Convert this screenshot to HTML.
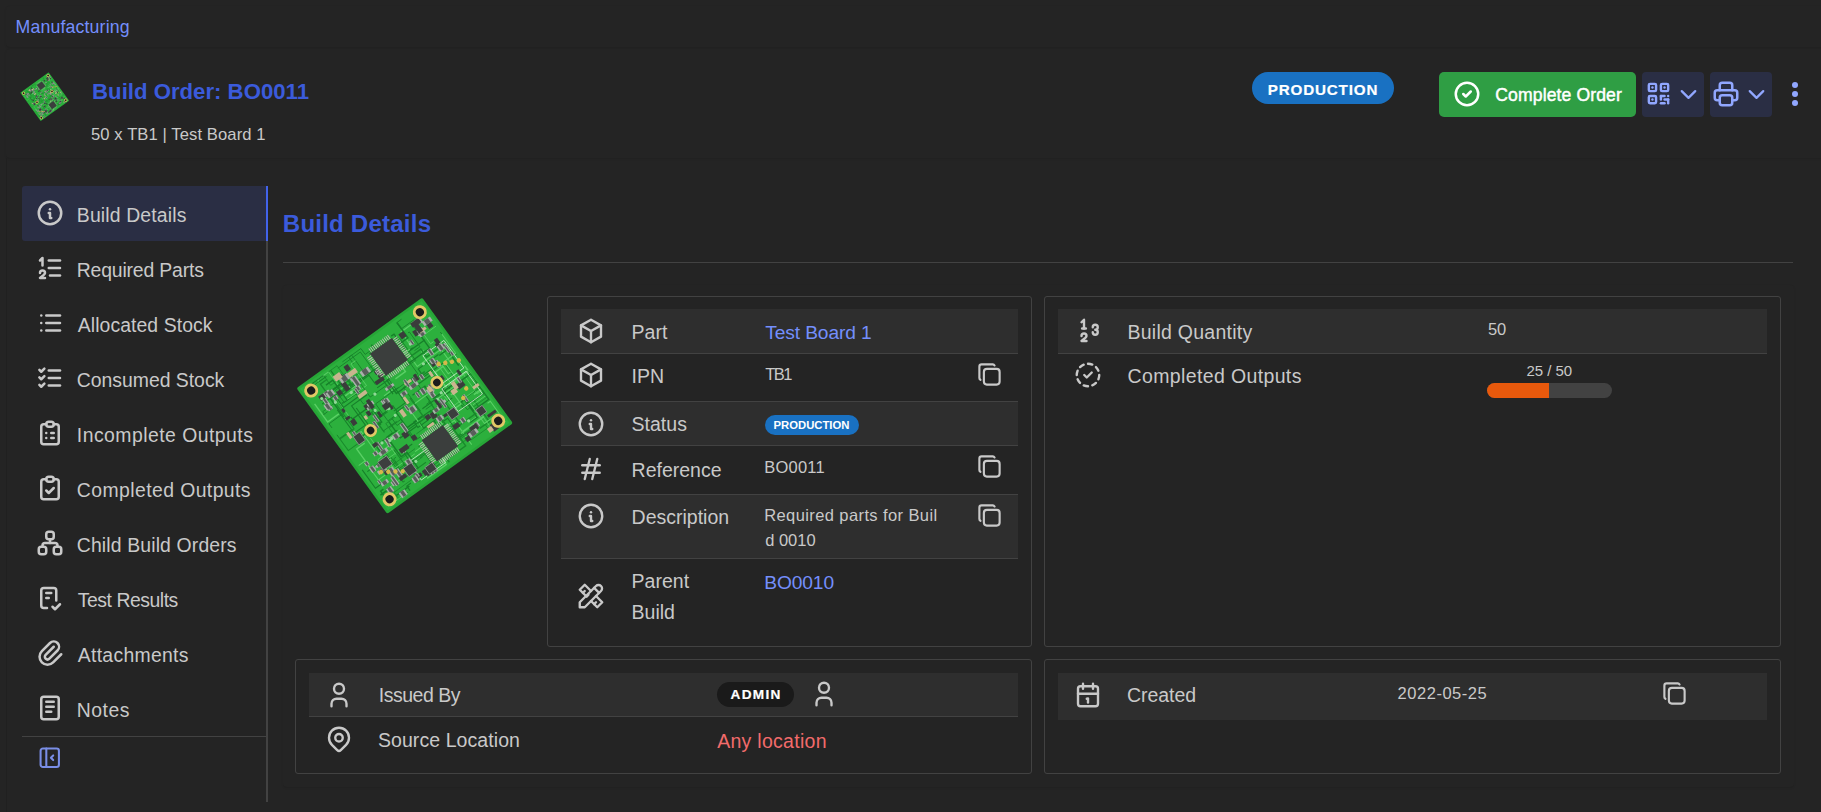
<!DOCTYPE html><html><head><meta charset="utf-8"><style>
html,body{margin:0;padding:0;}
body{width:1821px;height:812px;overflow:hidden;background:#242424;position:relative;font-family:"Liberation Sans", sans-serif;}
.t{position:absolute;white-space:nowrap;}
.r{position:absolute;}
.i{position:absolute;overflow:visible;}
</style></head><body>
<div class="r" style="left:6px;top:6px;width:1824px;height:41px;background:#242424;border-radius:4px;box-shadow:0 1px 2px rgba(0,0,0,0.10);"></div>
<div class="r" style="left:6px;top:49px;width:1824px;height:109px;background:#242424;border-radius:4px;box-shadow:0 1px 2px rgba(0,0,0,0.10);"></div>
<div class="r" style="left:6px;top:158px;width:1px;height:654px;background:#202020;border-radius:0px;"></div>
<div class="r" style="left:283px;top:285px;width:1511px;height:502px;background:#242424;border-radius:4px;box-shadow:0 1px 2px rgba(0,0,0,0.10);"></div>
<div class="t" style="left:15.50px;top:19.12px;font-size:17.7px;line-height:17.7px;color:#748ffc;font-weight:400;letter-spacing:0.167px;">Manufacturing</div>
<svg class="i" style="left:0;top:0" width="1821" height="812" viewBox="0 0 1821 812"><g transform="translate(44.7,96.7) rotate(-35.8) scale(0.22580645161290322)">
<rect x="-77.5" y="-77.5" width="155" height="155" rx="2" fill="#27a637"/>
<rect x="-75" y="-75" width="150" height="150" fill="#2cb03d"/>
<path d="M-24.7 -48.9 L-51.8 -48.9 L-51.8 -29.6 L-72.0 -29.6 L-72.0 -24.6" stroke="#17802a" stroke-width="0.8" fill="none"/>
<path d="M-58.0 -11.5 L-72.0 -11.5 L-72.0 -16.0" stroke="#17802a" stroke-width="0.8" fill="none"/>
<path d="M18.3 11.6 L22.9 11.6 L22.9 5.4" stroke="#17802a" stroke-width="0.8" fill="none"/>
<path d="M7.9 -51.4 L-13.4 -51.4 L-13.4 -72.0 L-24.9 -72.0" stroke="#17802a" stroke-width="0.8" fill="none"/>
<path d="M11.4 19.4 L-12.7 19.4 L-12.7 32.2 L-8.9 32.2" stroke="#17802a" stroke-width="1.1" fill="none"/>
<path d="M25.3 -10.1 L23.2 -10.1 L23.2 15.3 L14.9 15.3" stroke="#17802a" stroke-width="0.8" fill="none"/>
<path d="M27.9 -35.8 L15.9 -35.8 L15.9 -36.1 L6.5 -36.1 L6.5 -39.2" stroke="#17802a" stroke-width="0.8" fill="none"/>
<path d="M1.7 -46.9 L-19.2 -46.9 L-19.2 -47.6 L-46.9 -47.6" stroke="#17802a" stroke-width="1.4" fill="none"/>
<path d="M10.2 52.6 L0.6 52.6 L0.6 43.6 L0.4 43.6" stroke="#5ad065" stroke-width="0.8" fill="none"/>
<path d="M47.6 62.3 L59.4 62.3 L59.4 36.2 L72.0 36.2" stroke="#1a8a2c" stroke-width="1.4" fill="none"/>
<path d="M10.9 25.4 L-2.0 25.4 L-2.0 18.5 L8.1 18.5" stroke="#17802a" stroke-width="1.1" fill="none"/>
<path d="M-20.2 15.5 L-46.7 15.5 L-46.7 31.6 L-68.9 31.6" stroke="#17802a" stroke-width="1.1" fill="none"/>
<path d="M-15.3 52.0 L-35.3 52.0 L-35.3 46.1" stroke="#1a8a2c" stroke-width="0.8" fill="none"/>
<path d="M44.7 51.0 L57.1 51.0 L57.1 72.0 L68.0 72.0" stroke="#5ad065" stroke-width="0.8" fill="none"/>
<path d="M-48.9 -45.3 L-39.4 -45.3 L-39.4 -72.0" stroke="#17802a" stroke-width="1.1" fill="none"/>
<path d="M-30.5 -49.6 L-38.4 -49.6 L-38.4 -45.6 L-11.2 -45.6 L-11.2 -34.2" stroke="#17802a" stroke-width="1.1" fill="none"/>
<path d="M55.9 39.2 L72.0 39.2 L72.0 32.7 L65.9 32.7 L65.9 9.0" stroke="#5ad065" stroke-width="0.8" fill="none"/>
<path d="M-43.3 67.9 L-63.6 67.9 L-63.6 58.3 L-72.0 58.3" stroke="#17802a" stroke-width="1.4" fill="none"/>
<path d="M-48.8 -55.8 L-42.0 -55.8 L-42.0 -72.0 L-59.5 -72.0" stroke="#5ad065" stroke-width="0.8" fill="none"/>
<path d="M18.8 63.8 L10.7 63.8 L10.7 41.1 L31.6 41.1 L31.6 70.7" stroke="#5ad065" stroke-width="1.1" fill="none"/>
<path d="M-2.3 -58.0 L12.7 -58.0 L12.7 -43.6" stroke="#5ad065" stroke-width="1.4" fill="none"/>
<path d="M-47.4 -66.8 L-55.7 -66.8 L-55.7 -55.4 L-30.8 -55.4 L-30.8 -39.9" stroke="#1a8a2c" stroke-width="1.4" fill="none"/>
<path d="M50.9 27.5 L52.0 27.5 L52.0 52.0 L43.3 52.0" stroke="#17802a" stroke-width="1.4" fill="none"/>
<path d="M5.8 0.4 L-10.8 0.4 L-10.8 19.1 L18.3 19.1 L18.3 40.2" stroke="#17802a" stroke-width="1.1" fill="none"/>
<path d="M33.6 -38.3 L33.1 -38.3 L33.1 -24.4 L62.5 -24.4 L62.5 -7.0" stroke="#5ad065" stroke-width="1.1" fill="none"/>
<path d="M-42.9 14.7 L-46.1 14.7 L-46.1 40.9 L-16.8 40.9" stroke="#1a8a2c" stroke-width="0.8" fill="none"/>
<path d="M-39.1 -38.2 L-48.9 -38.2 L-48.9 -39.3" stroke="#17802a" stroke-width="1.1" fill="none"/>
<path d="M57.3 -21.8 L32.4 -21.8 L32.4 -12.2 L57.0 -12.2 L57.0 4.7" stroke="#17802a" stroke-width="1.1" fill="none"/>
<path d="M54.5 -9.3 L44.4 -9.3 L44.4 8.8 L72.0 8.8 L72.0 2.5" stroke="#5ad065" stroke-width="1.4" fill="none"/>
<path d="M62.6 31.5 L72.0 31.5 L72.0 3.1" stroke="#5ad065" stroke-width="1.4" fill="none"/>
<path d="M-49.5 45.7 L-40.1 45.7 L-40.1 36.7 L-37.2 36.7" stroke="#17802a" stroke-width="0.8" fill="none"/>
<path d="M-68.0 65.9 L-72.0 65.9 L-72.0 72.0 L-72.0 72.0 L-72.0 72.0" stroke="#17802a" stroke-width="0.8" fill="none"/>
<path d="M-66.1 -40.2 L-72.0 -40.2 L-72.0 -35.0 L-72.0 -35.0 L-72.0 -39.9" stroke="#17802a" stroke-width="0.8" fill="none"/>
<path d="M57.4 -20.5 L67.2 -20.5 L67.2 -1.6 L68.2 -1.6" stroke="#17802a" stroke-width="1.4" fill="none"/>
<path d="M-48.7 1.5 L-32.2 1.5 L-32.2 8.0 L-15.6 8.0" stroke="#17802a" stroke-width="0.8" fill="none"/>
<path d="M-50.2 16.7 L-46.8 16.7 L-46.8 6.2" stroke="#5ad065" stroke-width="0.8" fill="none"/>
<path d="M53.7 -62.0 L40.3 -62.0 L40.3 -45.7" stroke="#5ad065" stroke-width="1.4" fill="none"/>
<path d="M-66.1 55.2 L-69.5 55.2 L-69.5 61.9" stroke="#17802a" stroke-width="1.4" fill="none"/>
<path d="M-31.2 1.1 L-30.7 1.1 L-30.7 -14.0 L-29.3 -14.0" stroke="#1a8a2c" stroke-width="1.4" fill="none"/>
<path d="M55.0 -41.6 L33.2 -41.6 L33.2 -64.3 L29.7 -64.3" stroke="#17802a" stroke-width="1.4" fill="none"/>
<path d="M-36.3 -59.8 L-48.1 -59.8 L-48.1 -72.0 L-31.5 -72.0 L-31.5 -45.6" stroke="#1a8a2c" stroke-width="0.8" fill="none"/>
<path d="M-34.6 -50.8 L-51.4 -50.8 L-51.4 -23.6 L-57.5 -23.6" stroke="#5ad065" stroke-width="0.8" fill="none"/>
<path d="M68.6 46.5 L72.0 46.5 L72.0 72.0" stroke="#5ad065" stroke-width="1.1" fill="none"/>
<path d="M-11.0 -20.1 L2.3 -20.1 L2.3 -48.9" stroke="#5ad065" stroke-width="1.1" fill="none"/>
<path d="M28.4 -16.2 L35.9 -16.2 L35.9 -15.5 L9.7 -15.5 L9.7 13.6" stroke="#17802a" stroke-width="0.8" fill="none"/>
<path d="M-58.2 -31.9 L-72.0 -31.9 L-72.0 -54.2" stroke="#5ad065" stroke-width="1.4" fill="none"/>
<path d="M44.7 -33.8 L46.9 -33.8 L46.9 -32.9" stroke="#5ad065" stroke-width="1.4" fill="none"/>
<path d="M-24.2 -30.9 L-43.2 -30.9 L-43.2 -7.2 L-57.1 -7.2 L-57.1 -36.2" stroke="#17802a" stroke-width="1.1" fill="none"/>
<path d="M-58.3 49.9 L-72.0 49.9 L-72.0 27.2" stroke="#17802a" stroke-width="1.1" fill="none"/>
<path d="M69.2 -11.5 L72.0 -11.5 L72.0 -38.9 L72.0 -38.9" stroke="#17802a" stroke-width="0.8" fill="none"/>
<path d="M-33.3 -44.6 L-25.6 -44.6 L-25.6 -42.8 L-43.3 -42.8" stroke="#5ad065" stroke-width="1.4" fill="none"/>
<path d="M24.1 -32.1 L53.8 -32.1 L53.8 -59.9" stroke="#17802a" stroke-width="1.4" fill="none"/>
<path d="M0.8 66.9 L-0.7 66.9 L-0.7 72.0 L-24.3 72.0 L-24.3 72.0" stroke="#5ad065" stroke-width="1.4" fill="none"/>
<path d="M-0.7 46.8 L27.5 46.8 L27.5 35.3 L10.4 35.3" stroke="#17802a" stroke-width="1.1" fill="none"/>
<path d="M-42.2 53.5 L-34.0 53.5 L-34.0 47.8 L-43.2 47.8 L-43.2 21.0" stroke="#17802a" stroke-width="0.8" fill="none"/>
<path d="M-60.1 33.7 L-64.3 33.7 L-64.3 7.0 L-54.3 7.0" stroke="#5ad065" stroke-width="1.4" fill="none"/>
<path d="M23.9 -30.5 L35.4 -30.5 L35.4 -57.8" stroke="#17802a" stroke-width="0.8" fill="none"/>
<path d="M-32.3 -69.5 L-4.6 -69.5 L-4.6 -41.1 L-1.8 -41.1" stroke="#17802a" stroke-width="0.8" fill="none"/>
<path d="M65.2 -26.7 L46.2 -26.7 L46.2 -36.5 L21.2 -36.5" stroke="#1a8a2c" stroke-width="1.4" fill="none"/>
<path d="M21.8 -35.3 L-2.7 -35.3 L-2.7 -16.2" stroke="#17802a" stroke-width="1.1" fill="none"/>
<path d="M12.2 -14.8 L0.4 -14.8 L0.4 -30.9 L5.5 -30.9" stroke="#17802a" stroke-width="1.4" fill="none"/>
<path d="M55.0 39.8 L48.4 39.8 L48.4 29.3 L72.0 29.3 L72.0 8.3" stroke="#17802a" stroke-width="0.8" fill="none"/>
<path d="M45.5 30.1 L53.1 30.1 L53.1 44.1 L71.9 44.1 L71.9 22.5" stroke="#17802a" stroke-width="1.4" fill="none"/>
<path d="M11.8 55.0 L39.1 55.0 L39.1 63.6 L14.2 63.6 L14.2 36.1" stroke="#1a8a2c" stroke-width="0.8" fill="none"/>
<path d="M-17.3 -6.8 L-9.6 -6.8 L-9.6 0.8" stroke="#17802a" stroke-width="1.1" fill="none"/>
<path d="M-33.1 -6.0 L-18.2 -6.0 L-18.2 -5.8" stroke="#17802a" stroke-width="1.4" fill="none"/>
<path d="M3.6 34.4 L-11.2 34.4 L-11.2 8.9 L-25.3 8.9" stroke="#17802a" stroke-width="0.8" fill="none"/>
<path d="M33.6 66.6 L54.3 66.6 L54.3 41.2 L72.0 41.2" stroke="#1a8a2c" stroke-width="0.8" fill="none"/>
<path d="M16.4 20.0 L22.4 20.0 L22.4 9.9" stroke="#1a8a2c" stroke-width="1.4" fill="none"/>
<path d="M9.5 -68.3 L8.6 -68.3 L8.6 -39.9" stroke="#17802a" stroke-width="1.4" fill="none"/>
<path d="M-39.5 -1.5 L-38.5 -1.5 L-38.5 -3.6 L-40.6 -3.6 L-40.6 -26.5" stroke="#17802a" stroke-width="1.1" fill="none"/>
<path d="M66.9 61.1 L54.3 61.1 L54.3 35.7" stroke="#5ad065" stroke-width="1.1" fill="none"/>
<path d="M-15.8 58.3 L-41.4 58.3 L-41.4 33.7" stroke="#1a8a2c" stroke-width="1.1" fill="none"/>
<path d="M-51.4 44.8 L-64.7 44.8 L-64.7 21.6 L-72.0 21.6 L-72.0 21.5" stroke="#5ad065" stroke-width="1.1" fill="none"/>
<path d="M-66.5 -69.5 L-55.6 -69.5 L-55.6 -72.0 L-42.0 -72.0" stroke="#5ad065" stroke-width="1.1" fill="none"/>
<path d="M-17.3 -53.1 L-47.2 -53.1 L-47.2 -38.0 L-26.9 -38.0" stroke="#17802a" stroke-width="0.8" fill="none"/>
<path d="M29.8 56.2 L15.0 56.2 L15.0 30.1 L8.4 30.1" stroke="#17802a" stroke-width="1.1" fill="none"/>
<path d="M59.6 35.8 L46.4 35.8 L46.4 8.9" stroke="#1a8a2c" stroke-width="1.4" fill="none"/>
<path d="M61.0 -35.1 L57.2 -35.1 L57.2 -46.2 L72.0 -46.2" stroke="#5ad065" stroke-width="0.8" fill="none"/>
<path d="M43.7 18.3 L46.6 18.3 L46.6 31.5 L19.6 31.5 L19.6 45.4" stroke="#5ad065" stroke-width="1.4" fill="none"/>
<path d="M35.4 20.2 L34.5 20.2 L34.5 44.9 L37.5 44.9" stroke="#17802a" stroke-width="1.1" fill="none"/>
<path d="M-11.9 -30.6 L2.4 -30.6 L2.4 -2.0 L-12.0 -2.0" stroke="#17802a" stroke-width="1.1" fill="none"/>
<path d="M-2.4 23.6 L-22.3 23.6 L-22.3 3.3" stroke="#17802a" stroke-width="1.4" fill="none"/>
<path d="M56.8 -0.4 L54.0 -0.4 L54.0 -10.4" stroke="#5ad065" stroke-width="1.1" fill="none"/>
<path d="M-50.5 -43.1 L-70.0 -43.1 L-70.0 -39.7" stroke="#1a8a2c" stroke-width="0.8" fill="none"/>
<path d="M-18.4 43.3 L4.8 43.3 L4.8 58.3" stroke="#5ad065" stroke-width="1.1" fill="none"/>
<path d="M-12.1 3.4 L-25.8 3.4 L-25.8 18.5 L-26.0 18.5" stroke="#1a8a2c" stroke-width="0.8" fill="none"/>
<path d="M26.1 4.1 L1.7 4.1 L1.7 27.9" stroke="#5ad065" stroke-width="1.1" fill="none"/>
<path d="M20.4 -9.5 L41.3 -9.5 L41.3 12.8 L12.6 12.8" stroke="#17802a" stroke-width="1.1" fill="none"/>
<path d="M29.3 55.4 L57.4 55.4 L57.4 54.8 L31.8 54.8" stroke="#5ad065" stroke-width="1.1" fill="none"/>
<path d="M-35.2 -54.7 L-56.1 -54.7 L-56.1 -26.4" stroke="#17802a" stroke-width="1.4" fill="none"/>
<path d="M28.1 48.5 L3.2 48.5 L3.2 65.1 L-26.7 65.1" stroke="#17802a" stroke-width="0.8" fill="none"/>
<path d="M9.7 -64.7 L-2.1 -64.7 L-2.1 -72.0 L-17.0 -72.0 L-17.0 -63.8" stroke="#17802a" stroke-width="0.8" fill="none"/>
<path d="M-60.2 3.4 L-72.0 3.4 L-72.0 -10.9 L-54.6 -10.9 L-54.6 -40.9" stroke="#1a8a2c" stroke-width="1.1" fill="none"/>
<path d="M-31.0 -25.7 L-32.5 -25.7 L-32.5 -41.6" stroke="#17802a" stroke-width="0.8" fill="none"/>
<path d="M64.5 28.7 L37.8 28.7 L37.8 10.3 L60.9 10.3" stroke="#5ad065" stroke-width="0.8" fill="none"/>
<path d="M-34.0 23.4 L-50.4 23.4 L-50.4 -4.5 L-60.1 -4.5" stroke="#5ad065" stroke-width="1.1" fill="none"/>
<path d="M25.6 -42.3 L39.9 -42.3 L39.9 -42.0 L22.2 -42.0" stroke="#17802a" stroke-width="1.1" fill="none"/>
<path d="M37.2 -42.8 L20.5 -42.8 L20.5 -27.2 L8.2 -27.2" stroke="#5ad065" stroke-width="1.4" fill="none"/>
<path d="M-43.8 -38.7 L-19.2 -38.7 L-19.2 -65.3 L-13.5 -65.3" stroke="#5ad065" stroke-width="0.8" fill="none"/>
<path d="M-40.2 66.4 L-45.3 66.4 L-45.3 72.0" stroke="#17802a" stroke-width="1.1" fill="none"/>
<path d="M-7.1 29.7 L6.9 29.7 L6.9 59.5 L32.8 59.5" stroke="#1a8a2c" stroke-width="0.8" fill="none"/>
<path d="M-44.0 61.0 L-46.0 61.0 L-46.0 49.7 L-32.4 49.7 L-32.4 70.1" stroke="#1a8a2c" stroke-width="1.1" fill="none"/>
<path d="M-46.3 -69.6 L-71.5 -69.6 L-71.5 -72.0 L-48.3 -72.0" stroke="#17802a" stroke-width="1.1" fill="none"/>
<path d="M-20.1 45.0 L-44.8 45.0 L-44.8 57.3 L-63.1 57.3" stroke="#5ad065" stroke-width="0.8" fill="none"/>
<path d="M-24.7 33.2 L-52.9 33.2 L-52.9 27.9 L-34.2 27.9" stroke="#5ad065" stroke-width="0.8" fill="none"/>
<path d="M-17.4 -5.0 L-32.0 -5.0 L-32.0 9.8" stroke="#1a8a2c" stroke-width="1.1" fill="none"/>
<path d="M-31.9 64.1 L-59.3 64.1 L-59.3 72.0 L-47.9 72.0 L-47.9 72.0" stroke="#1a8a2c" stroke-width="0.8" fill="none"/>
<path d="M31.0 13.4 L57.8 13.4 L57.8 -12.7 L72.0 -12.7 L72.0 -36.3" stroke="#5ad065" stroke-width="1.1" fill="none"/>
<path d="M40.6 57.9 L18.5 57.9 L18.5 57.7 L-10.9 57.7" stroke="#1a8a2c" stroke-width="1.4" fill="none"/>
<path d="M38.2 15.0 L59.9 15.0 L59.9 12.7 L72.0 12.7" stroke="#17802a" stroke-width="1.4" fill="none"/>
<path d="M-42.4 35.4 L-47.9 35.4 L-47.9 44.4" stroke="#5ad065" stroke-width="1.4" fill="none"/>
<path d="M6.2 -47.5 L29.3 -47.5 L29.3 -18.2 L15.1 -18.2" stroke="#17802a" stroke-width="0.8" fill="none"/>
<path d="M-56.5 -0.2 L-28.2 -0.2 L-28.2 -19.8 L-50.2 -19.8 L-50.2 -22.2" stroke="#17802a" stroke-width="1.4" fill="none"/>
<path d="M5.4 38.3 L22.2 38.3 L22.2 26.0" stroke="#1a8a2c" stroke-width="1.4" fill="none"/>
<path d="M-32.5 -34.4 L-50.6 -34.4 L-50.6 -49.6 L-65.9 -49.6" stroke="#17802a" stroke-width="1.1" fill="none"/>
<path d="M53.8 11.0 L27.7 11.0 L27.7 -3.9 L12.4 -3.9" stroke="#17802a" stroke-width="1.4" fill="none"/>
<path d="M43.2 21.5 L19.3 21.5 L19.3 20.0" stroke="#17802a" stroke-width="1.1" fill="none"/>
<path d="M58.0 -64.3 L42.0 -64.3 L42.0 -72.0 L48.0 -72.0" stroke="#17802a" stroke-width="0.8" fill="none"/>
<path d="M-17.9 51.3 L-11.7 51.3 L-11.7 67.8 L-1.8 67.8" stroke="#17802a" stroke-width="0.8" fill="none"/>
<path d="M19.2 29.4 L2.3 29.4 L2.3 21.5 L-19.2 21.5" stroke="#17802a" stroke-width="1.1" fill="none"/>
<path d="M-64.6 32.5 L-45.8 32.5 L-45.8 51.6" stroke="#5ad065" stroke-width="1.4" fill="none"/>
<path d="M-17.9 16.9 L-35.7 16.9 L-35.7 34.7" stroke="#5ad065" stroke-width="0.8" fill="none"/>
<path d="M-12.9 41.4 L-9.8 41.4 L-9.8 49.8 L-34.4 49.8 L-34.4 29.6" stroke="#1a8a2c" stroke-width="1.1" fill="none"/>
<path d="M68.4 23.5 L72.0 23.5 L72.0 12.2 L72.0 12.2" stroke="#1a8a2c" stroke-width="1.1" fill="none"/>
<path d="M-11.7 51.0 L-3.0 51.0 L-3.0 44.4 L-8.7 44.4" stroke="#17802a" stroke-width="1.1" fill="none"/>
<path d="M56.2 -10.7 L50.6 -10.7 L50.6 12.3" stroke="#5ad065" stroke-width="0.8" fill="none"/>
<path d="M-51.8 -62.8 L-43.4 -62.8 L-43.4 -38.2" stroke="#17802a" stroke-width="1.4" fill="none"/>
<path d="M17.1 -18.1 L-2.6 -18.1 L-2.6 -27.2 L-22.9 -27.2 L-22.9 -46.9" stroke="#17802a" stroke-width="0.8" fill="none"/>
<path d="M-16.3 35.5 L-28.2 35.5 L-28.2 55.7" stroke="#17802a" stroke-width="1.1" fill="none"/>
<path d="M-26.0 15.1 L-32.7 15.1 L-32.7 39.3 L-25.5 39.3 L-25.5 58.8" stroke="#17802a" stroke-width="1.4" fill="none"/>
<path d="M40.0 -38.9 L46.9 -38.9 L46.9 -57.1 L45.3 -57.1" stroke="#17802a" stroke-width="0.8" fill="none"/>
<path d="M-14.0 2.5 L-22.5 2.5 L-22.5 -18.5 L5.8 -18.5" stroke="#17802a" stroke-width="0.8" fill="none"/>
<path d="M53.7 47.9 L26.0 47.9 L26.0 68.2 L3.1 68.2 L3.1 72.0" stroke="#1a8a2c" stroke-width="1.4" fill="none"/>
<path d="M-11.2 11.6 L-17.8 11.6 L-17.8 3.6 L-17.6 3.6" stroke="#17802a" stroke-width="0.8" fill="none"/>
<path d="M-69.5 68.1 L-72.0 68.1 L-72.0 72.0 L-55.2 72.0" stroke="#5ad065" stroke-width="0.8" fill="none"/>
<path d="M43.5 -14.0 L21.2 -14.0 L21.2 -18.1" stroke="#17802a" stroke-width="1.1" fill="none"/>
<path d="M0.6 22.0 L8.8 22.0 L8.8 -3.1" stroke="#1a8a2c" stroke-width="1.4" fill="none"/>
<path d="M1.6 -62.4 L25.3 -62.4 L25.3 -53.2 L42.4 -53.2 L42.4 -72.0" stroke="#17802a" stroke-width="1.4" fill="none"/>
<path d="M32.5 44.1 L10.4 44.1 L10.4 67.2" stroke="#1a8a2c" stroke-width="0.8" fill="none"/>
<g stroke="#d8f0d8" stroke-width="0.9" fill="none" opacity="0.8">
<rect x="44" y="-30" width="26" height="34"/><rect x="40" y="8" width="30" height="28"/><rect x="-30" y="48" width="30" height="22"/>
</g>
<rect x="25.3" y="30.1" width="5" height="3" fill="#3a3d3b"/>
<rect x="-33.7" y="-24.0" width="8" height="5" fill="#3a3d3b"/>
<rect x="-33.4" y="63.1" width="7" height="4" fill="#3a3d3b"/>
<rect x="-35.7" y="-17.4" width="4" height="5" fill="#3a3d3b"/>
<rect x="-30.2" y="-23.4" width="7" height="4" fill="#a9b1aa"/><rect x="-28.4" y="-23.4" width="3.5" height="4" fill="#585e5a"/>
<rect x="36.5" y="-61.4" width="6" height="6" fill="#3a3d3b"/>
<rect x="52.0" y="-53.8" width="8" height="6" fill="#a9b1aa"/><rect x="54.0" y="-53.8" width="4.0" height="6" fill="#585e5a"/>
<rect x="-16.9" y="-17.8" width="5" height="5" fill="#a9b1aa"/><rect x="-15.6" y="-17.8" width="2.5" height="5" fill="#585e5a"/>
<rect x="-36.7" y="15.7" width="4" height="5" fill="#a9b1aa"/><rect x="-35.7" y="15.7" width="2.0" height="5" fill="#585e5a"/>
<rect x="11.7" y="22.3" width="6" height="3" fill="#a9b1aa"/><rect x="13.2" y="22.3" width="3.0" height="3" fill="#585e5a"/>
<rect x="-28.4" y="17.1" width="7" height="5" fill="#a9b1aa"/><rect x="-26.7" y="17.1" width="3.5" height="5" fill="#585e5a"/>
<rect x="-37.1" y="20.8" width="3" height="4" fill="#a9b1aa"/><rect x="-36.3" y="20.8" width="1.5" height="4" fill="#585e5a"/>
<rect x="-53.5" y="-19.4" width="5" height="6" fill="#3a3d3b"/>
<circle cx="-40.2" cy="16.9" r="1.6" fill="#8fd896"/>
<circle cx="-34.9" cy="-47.7" r="1.6" fill="#8fd896"/>
<rect x="38.4" y="-13.3" width="3" height="6" fill="#c9b58e"/>
<rect x="53.4" y="12.9" width="8" height="6" fill="#3a3d3b"/>
<rect x="-64.6" y="-42.8" width="5" height="3" fill="#a9b1aa"/><rect x="-63.3" y="-42.8" width="2.5" height="3" fill="#585e5a"/>
<rect x="15.3" y="21.3" width="4" height="5" fill="#3a3d3b"/>
<rect x="19.4" y="20.1" width="7" height="4" fill="#a9b1aa"/><rect x="21.2" y="20.1" width="3.5" height="4" fill="#585e5a"/>
<rect x="30.5" y="-3.0" width="3" height="8" fill="#a9b1aa"/><rect x="31.3" y="-3.0" width="1.5" height="8" fill="#585e5a"/>
<circle cx="56.1" cy="-57.1" r="1.6" fill="#8fd896"/>
<circle cx="-32.4" cy="19.6" r="1.6" fill="#8fd896"/>
<rect x="60.2" y="-32.2" width="4" height="5" fill="#3a3d3b"/>
<rect x="64.2" y="-27.8" width="5" height="3" fill="#a9b1aa"/><rect x="65.4" y="-27.8" width="2.5" height="3" fill="#585e5a"/>
<rect x="-32.6" y="-35.9" width="10" height="4" fill="#c9b58e"/>
<circle cx="-23.5" cy="51.7" r="1.6" fill="#8fd896"/>
<rect x="57.3" y="65.5" width="6" height="8" fill="#3a3d3b"/>
<rect x="62.0" y="-36.2" width="4" height="6" fill="#3a3d3b"/>
<rect x="-63.5" y="-52.8" width="4" height="8" fill="#a9b1aa"/><rect x="-62.5" y="-52.8" width="2.0" height="8" fill="#585e5a"/>
<rect x="26.2" y="18.2" width="10" height="3" fill="#a9b1aa"/><rect x="28.7" y="18.2" width="5.0" height="3" fill="#585e5a"/>
<rect x="12.3" y="-18.6" width="8" height="3" fill="#c9b58e"/>
<rect x="28.7" y="-15.8" width="4" height="5" fill="#a9b1aa"/><rect x="29.7" y="-15.8" width="2.0" height="5" fill="#585e5a"/>
<rect x="61.1" y="55.9" width="10" height="3" fill="#3a3d3b"/>
<rect x="-28.9" y="-54.4" width="4" height="4" fill="#a9b1aa"/><rect x="-27.9" y="-54.4" width="2.0" height="4" fill="#585e5a"/>
<rect x="-32.5" y="-20.3" width="6" height="3" fill="#a9b1aa"/><rect x="-31.0" y="-20.3" width="3.0" height="3" fill="#585e5a"/>
<rect x="-24.4" y="63.1" width="8" height="6" fill="#3a3d3b"/>
<rect x="-63.8" y="-11.8" width="3" height="7" fill="#c9b58e"/>
<rect x="49.3" y="-55.6" width="4" height="6" fill="#3a3d3b"/>
<rect x="-28.8" y="34.1" width="3" height="4" fill="#a9b1aa"/><rect x="-28.0" y="34.1" width="1.5" height="4" fill="#585e5a"/>
<rect x="26.5" y="44.2" width="7" height="5" fill="#3a3d3b"/>
<circle cx="42.9" cy="59.6" r="1.6" fill="#8fd896"/>
<rect x="36.3" y="-1.3" width="10" height="3" fill="#a9b1aa"/><rect x="38.8" y="-1.3" width="5.0" height="3" fill="#585e5a"/>
<rect x="-13.4" y="-14.3" width="3" height="10" fill="#3a3d3b"/>
<circle cx="-17.4" cy="-26.8" r="1.6" fill="#8fd896"/>
<rect x="-36.2" y="-5.3" width="3" height="8" fill="#a9b1aa"/><rect x="-35.5" y="-5.3" width="1.5" height="8" fill="#585e5a"/>
<rect x="-46.9" y="46.7" width="5" height="10" fill="#a9b1aa"/><rect x="-45.6" y="46.7" width="2.5" height="10" fill="#585e5a"/>
<circle cx="37.2" cy="10.8" r="1.6" fill="#8fd896"/>
<circle cx="-35.6" cy="-41.9" r="1.6" fill="#8fd896"/>
<circle cx="30.3" cy="14.0" r="1.6" fill="#8fd896"/>
<rect x="-32.8" y="61.9" width="4" height="4" fill="#a9b1aa"/><rect x="-31.8" y="61.9" width="2.0" height="4" fill="#585e5a"/>
<rect x="-15.7" y="65.8" width="5" height="6" fill="#a9b1aa"/><rect x="-14.5" y="65.8" width="2.5" height="6" fill="#585e5a"/>
<rect x="-39.9" y="-15.2" width="3" height="4" fill="#c9b58e"/>
<rect x="26.3" y="0.1" width="5" height="10" fill="#a9b1aa"/><rect x="27.6" y="0.1" width="2.5" height="10" fill="#585e5a"/>
<rect x="14.1" y="-13.0" width="10" height="4" fill="#a9b1aa"/><rect x="16.6" y="-13.0" width="5.0" height="4" fill="#585e5a"/>
<rect x="-10.7" y="-36.9" width="10" height="4" fill="#3a3d3b"/>
<rect x="-6.3" y="-25.4" width="10" height="3" fill="#a9b1aa"/><rect x="-3.8" y="-25.4" width="5.0" height="3" fill="#585e5a"/>
<rect x="-13.6" y="28.9" width="5" height="5" fill="#3a3d3b"/>
<rect x="-65.3" y="48.8" width="8" height="4" fill="#a9b1aa"/><rect x="-63.3" y="48.8" width="4.0" height="4" fill="#585e5a"/>
<rect x="-66.6" y="45.1" width="3" height="4" fill="#a9b1aa"/><rect x="-65.8" y="45.1" width="1.5" height="4" fill="#585e5a"/>
<rect x="29.4" y="61.4" width="5" height="5" fill="#3a3d3b"/>
<rect x="5.6" y="29.6" width="8" height="3" fill="#c9b58e"/>
<rect x="2.9" y="-12.2" width="7" height="4" fill="#a9b1aa"/><rect x="4.7" y="-12.2" width="3.5" height="4" fill="#585e5a"/>
<rect x="31.2" y="15.5" width="3" height="10" fill="#a9b1aa"/><rect x="31.9" y="15.5" width="1.5" height="10" fill="#585e5a"/>
<rect x="-59.6" y="-57.8" width="7" height="5" fill="#a9b1aa"/><rect x="-57.9" y="-57.8" width="3.5" height="5" fill="#585e5a"/>
<circle cx="-26.7" cy="-13.5" r="1.6" fill="#8fd896"/>
<rect x="-5.2" y="-45.6" width="4" height="4" fill="#3a3d3b"/>
<rect x="-37.3" y="63.1" width="6" height="6" fill="#a9b1aa"/><rect x="-35.8" y="63.1" width="3.0" height="6" fill="#585e5a"/>
<rect x="45.4" y="-19.8" width="5" height="5" fill="#3a3d3b"/>
<rect x="65.7" y="24.3" width="7" height="3" fill="#c9b58e"/>
<rect x="-19.3" y="21.0" width="6" height="6" fill="#3a3d3b"/>
<rect x="-56.4" y="54.0" width="5" height="5" fill="#a9b1aa"/><rect x="-55.1" y="54.0" width="2.5" height="5" fill="#585e5a"/>
<rect x="44.6" y="55.2" width="5" height="5" fill="#a9b1aa"/><rect x="45.8" y="55.2" width="2.5" height="5" fill="#585e5a"/>
<rect x="-54.2" y="-48.6" width="5" height="4" fill="#a9b1aa"/><rect x="-52.9" y="-48.6" width="2.5" height="4" fill="#585e5a"/>
<rect x="-47.2" y="55.0" width="8" height="4" fill="#3a3d3b"/>
<rect x="64.9" y="-55.7" width="5" height="8" fill="#3a3d3b"/>
<circle cx="-36.2" cy="-49.0" r="1.6" fill="#8fd896"/>
<rect x="-45.6" y="13.5" width="3" height="10" fill="#a9b1aa"/><rect x="-44.9" y="13.5" width="1.5" height="10" fill="#585e5a"/>
<rect x="26.6" y="-0.3" width="6" height="6" fill="#a9b1aa"/><rect x="28.1" y="-0.3" width="3.0" height="6" fill="#585e5a"/>
<rect x="62.6" y="-57.7" width="10" height="5" fill="#a9b1aa"/><rect x="65.1" y="-57.7" width="5.0" height="5" fill="#585e5a"/>
<rect x="14.9" y="24.8" width="6" height="3" fill="#3a3d3b"/>
<rect x="54.1" y="-63.4" width="10" height="6" fill="#a9b1aa"/><rect x="56.6" y="-63.4" width="5.0" height="6" fill="#585e5a"/>
<rect x="49.2" y="-18.2" width="4" height="7" fill="#a9b1aa"/><rect x="50.2" y="-18.2" width="2.0" height="7" fill="#585e5a"/>
<rect x="-33.8" y="-60.8" width="5" height="6" fill="#3a3d3b"/>
<rect x="-22.6" y="65.9" width="8" height="5" fill="#3a3d3b"/>
<circle cx="39.7" cy="-23.0" r="1.6" fill="#8fd896"/>
<rect x="-56.1" y="67.5" width="7" height="6" fill="#a9b1aa"/><rect x="-54.3" y="67.5" width="3.5" height="6" fill="#585e5a"/>
<rect x="-27.1" y="-67.2" width="5" height="6" fill="#3a3d3b"/>
<rect x="39.3" y="55.7" width="8" height="6" fill="#3a3d3b"/>
<rect x="26.7" y="13.1" width="3" height="10" fill="#3a3d3b"/>
<circle cx="-54.2" cy="-43.3" r="1.6" fill="#8fd896"/>
<rect x="21.2" y="-17.8" width="5" height="5" fill="#a9b1aa"/><rect x="22.4" y="-17.8" width="2.5" height="5" fill="#585e5a"/>
<rect x="-26.9" y="-10.6" width="3" height="6" fill="#3a3d3b"/>
<rect x="-51.8" y="42.2" width="6" height="8" fill="#a9b1aa"/><rect x="-50.3" y="42.2" width="3.0" height="8" fill="#585e5a"/>
<rect x="-15.3" y="12.5" width="4" height="10" fill="#a9b1aa"/><rect x="-14.3" y="12.5" width="2.0" height="10" fill="#585e5a"/>
<rect x="-54.1" y="19.7" width="5" height="4" fill="#a9b1aa"/><rect x="-52.9" y="19.7" width="2.5" height="4" fill="#585e5a"/>
<rect x="-66.7" y="23.0" width="4" height="4" fill="#a9b1aa"/><rect x="-65.7" y="23.0" width="2.0" height="4" fill="#585e5a"/>
<rect x="-65.6" y="29.8" width="5" height="6" fill="#a9b1aa"/><rect x="-64.3" y="29.8" width="2.5" height="6" fill="#585e5a"/>
<rect x="-61.2" y="37.3" width="10" height="4" fill="#a9b1aa"/><rect x="-58.7" y="37.3" width="5.0" height="4" fill="#585e5a"/>
<rect x="17.5" y="28.5" width="7" height="5" fill="#a9b1aa"/><rect x="19.2" y="28.5" width="3.5" height="5" fill="#585e5a"/>
<rect x="52.1" y="25.4" width="3" height="8" fill="#a9b1aa"/><rect x="52.9" y="25.4" width="1.5" height="8" fill="#585e5a"/>
<rect x="45.5" y="14.8" width="6" height="5" fill="#c9b58e"/>
<rect x="-4.1" y="-45.4" width="4" height="5" fill="#a9b1aa"/><rect x="-3.1" y="-45.4" width="2.0" height="5" fill="#585e5a"/>
<rect x="41.1" y="-3.1" width="7" height="5" fill="#3a3d3b"/>
<rect x="-28.2" y="-59.8" width="10" height="5" fill="#c9b58e"/>
<rect x="-65.9" y="-47.4" width="6" height="6" fill="#a9b1aa"/><rect x="-64.4" y="-47.4" width="3.0" height="6" fill="#585e5a"/>
<rect x="-15.3" y="-16.8" width="6" height="5" fill="#a9b1aa"/><rect x="-13.8" y="-16.8" width="3.0" height="5" fill="#585e5a"/>
<rect x="-32.2" y="-10.5" width="3" height="8" fill="#a9b1aa"/><rect x="-31.5" y="-10.5" width="1.5" height="8" fill="#585e5a"/>
<rect x="53.1" y="67.0" width="5" height="5" fill="#c9b58e"/>
<rect x="-0.0" y="4.7" width="8" height="6" fill="#a9b1aa"/><rect x="2.0" y="4.7" width="4.0" height="6" fill="#585e5a"/>
<rect x="34.0" y="58.7" width="5" height="5" fill="#3a3d3b"/>
<rect x="-4.7" y="-39.9" width="6" height="3" fill="#3a3d3b"/>
<rect x="-56.1" y="41.7" width="4" height="4" fill="#3a3d3b"/>
<rect x="-32.7" y="45.3" width="6" height="6" fill="#a9b1aa"/><rect x="-31.2" y="45.3" width="3.0" height="6" fill="#585e5a"/>
<rect x="-39.1" y="-55.5" width="5" height="10" fill="#3a3d3b"/>
<circle cx="-13.3" cy="2.3" r="1.6" fill="#8fd896"/>
<rect x="-17.1" y="-53.6" width="10" height="6" fill="#a9b1aa"/><rect x="-14.6" y="-53.6" width="5.0" height="6" fill="#585e5a"/>
<rect x="13.2" y="-21.1" width="3" height="8" fill="#a9b1aa"/><rect x="14.0" y="-21.1" width="1.5" height="8" fill="#585e5a"/>
<rect x="50.4" y="8.9" width="4" height="8" fill="#c9b58e"/>
<rect x="36.3" y="43.4" width="5" height="5" fill="#a9b1aa"/><rect x="37.6" y="43.4" width="2.5" height="5" fill="#585e5a"/>
<rect x="67.3" y="-16.6" width="3" height="4" fill="#a9b1aa"/><rect x="68.0" y="-16.6" width="1.5" height="4" fill="#585e5a"/>
<rect x="28.0" y="-1.8" width="4" height="6" fill="#c9b58e"/>
<rect x="-55.8" y="-24.7" width="5" height="3" fill="#3a3d3b"/>
<circle cx="-14.5" cy="-7.0" r="1.6" fill="#8fd896"/>
<rect x="-37.8" y="-62.7" width="5" height="6" fill="#3a3d3b"/>
<rect x="-64.2" y="57.0" width="6" height="6" fill="#a9b1aa"/><rect x="-62.7" y="57.0" width="3.0" height="6" fill="#585e5a"/>
<rect x="34.7" y="59.8" width="10" height="5" fill="#a9b1aa"/><rect x="37.2" y="59.8" width="5.0" height="5" fill="#585e5a"/>
<rect x="20.7" y="-4.0" width="5" height="6" fill="#a9b1aa"/><rect x="22.0" y="-4.0" width="2.5" height="6" fill="#585e5a"/>
<circle cx="-16.4" cy="-8.0" r="1.6" fill="#8fd896"/>
<circle cx="40.6" cy="-46.7" r="1.6" fill="#8fd896"/>
<rect x="52.9" y="-49.0" width="7" height="3" fill="#a9b1aa"/><rect x="54.6" y="-49.0" width="3.5" height="3" fill="#585e5a"/>
<rect x="-65.0" y="-57.8" width="6" height="5" fill="#3a3d3b"/>
<rect x="-37.9" y="-60.3" width="10" height="6" fill="#a9b1aa"/><rect x="-35.4" y="-60.3" width="5.0" height="6" fill="#585e5a"/>
<rect x="50.4" y="-31.8" width="4" height="7" fill="#a9b1aa"/><rect x="51.4" y="-31.8" width="2.0" height="7" fill="#585e5a"/>
<rect x="46.2" y="-22.5" width="5" height="5" fill="#a9b1aa"/><rect x="47.4" y="-22.5" width="2.5" height="5" fill="#585e5a"/>
<rect x="54.8" y="-52.5" width="8" height="3" fill="#c9b58e"/>
<rect x="57.8" y="8.2" width="3" height="6" fill="#a9b1aa"/><rect x="58.6" y="8.2" width="1.5" height="6" fill="#585e5a"/>
<rect x="-18.5" y="66.8" width="4" height="5" fill="#a9b1aa"/><rect x="-17.5" y="66.8" width="2.0" height="5" fill="#585e5a"/>
<rect x="53.9" y="-60.2" width="5" height="10" fill="#3a3d3b"/>
<rect x="-7.9" y="1.1" width="4" height="8" fill="#c9b58e"/>
<rect x="60.3" y="-29.1" width="6" height="6" fill="#a9b1aa"/><rect x="61.8" y="-29.1" width="3.0" height="6" fill="#585e5a"/>
<rect x="-30.3" y="-43.4" width="5" height="4" fill="#a9b1aa"/><rect x="-29.1" y="-43.4" width="2.5" height="4" fill="#585e5a"/>
<rect x="-57.2" y="-56.1" width="8" height="6" fill="#a9b1aa"/><rect x="-55.2" y="-56.1" width="4.0" height="6" fill="#585e5a"/>
<rect x="-49.4" y="23.1" width="10" height="4" fill="#a9b1aa"/><rect x="-46.9" y="23.1" width="5.0" height="4" fill="#585e5a"/>
<rect x="-59.1" y="31.6" width="7" height="3" fill="#a9b1aa"/><rect x="-57.3" y="31.6" width="3.5" height="3" fill="#585e5a"/>
<circle cx="-29.7" cy="18.9" r="1.6" fill="#8fd896"/>
<rect x="-31.8" y="-42.7" width="3" height="6" fill="#a9b1aa"/><rect x="-31.0" y="-42.7" width="1.5" height="6" fill="#585e5a"/>
<rect x="2.7" y="-7.4" width="3" height="8" fill="#c9b58e"/>
<circle cx="43.0" cy="49.7" r="1.6" fill="#8fd896"/>
<rect x="-28.4" y="-53.4" width="6" height="10" fill="#a9b1aa"/><rect x="-26.9" y="-53.4" width="3.0" height="10" fill="#585e5a"/>
<rect x="41.4" y="-49.7" width="3" height="5" fill="#a9b1aa"/><rect x="42.2" y="-49.7" width="1.5" height="5" fill="#585e5a"/>
<rect x="-54.0" y="-33.9" width="3" height="4" fill="#3a3d3b"/>
<rect x="-41.5" y="-65.6" width="8" height="6" fill="#c9b58e"/>
<rect x="-54.0" y="50.3" width="4" height="10" fill="#a9b1aa"/><rect x="-53.0" y="50.3" width="2.0" height="10" fill="#585e5a"/>
<rect x="-0.9" y="0.1" width="3" height="6" fill="#a9b1aa"/><rect x="-0.1" y="0.1" width="1.5" height="6" fill="#585e5a"/>
<rect x="-49.4" y="12.5" width="5" height="4" fill="#3a3d3b"/>
<rect x="-14.1" y="61.0" width="4" height="6" fill="#3a3d3b"/>
<rect x="-18.6" y="-13.5" width="6" height="6" fill="#3a3d3b"/>
<rect x="66.1" y="-24.4" width="3" height="7" fill="#a9b1aa"/><rect x="66.8" y="-24.4" width="1.5" height="7" fill="#585e5a"/>
<rect x="24.5" y="-19.9" width="3" height="7" fill="#3a3d3b"/>
<rect x="-58.6" y="-9.1" width="3" height="8" fill="#a9b1aa"/><rect x="-57.8" y="-9.1" width="1.5" height="8" fill="#585e5a"/>
<circle cx="-14.0" cy="67.7" r="1.6" fill="#8fd896"/>
<rect x="52.3" y="-63.3" width="10" height="5" fill="#3a3d3b"/>
<circle cx="-63.1" cy="-54.3" r="1.6" fill="#8fd896"/>
<rect x="-28.9" y="-26.5" width="4" height="10" fill="#3a3d3b"/>
<rect x="62.0" y="1.9" width="3" height="6" fill="#3a3d3b"/>
<rect x="-47.8" y="-51.1" width="5" height="5" fill="#3a3d3b"/>
<rect x="-30.7" y="32.1" width="10" height="5" fill="#3a3d3b"/>
<rect x="9.5" y="20.4" width="5" height="5" fill="#3a3d3b"/>
<rect x="15.3" y="-4.2" width="3" height="6" fill="#a9b1aa"/><rect x="16.1" y="-4.2" width="1.5" height="6" fill="#585e5a"/>
<rect x="-55" y="30" width="11" height="10" fill="#3c3f3e" stroke="#8c948c" stroke-width="0.8"/>
<rect x="-38" y="50" width="10" height="10" fill="#3c3f3e" stroke="#8c948c" stroke-width="0.8"/>
<rect x="-20" y="62" width="9" height="8" fill="#3c3f3e" stroke="#8c948c" stroke-width="0.8"/>
<rect x="-60" y="-5" width="8" height="10" fill="#3c3f3e" stroke="#8c948c" stroke-width="0.8"/>
<rect x="30" y="30" width="9" height="9" fill="#3c3f3e" stroke="#8c948c" stroke-width="0.8"/>
<rect x="55" y="45" width="8" height="8" fill="#3c3f3e" stroke="#8c948c" stroke-width="0.8"/>
<path d="M4.3 -67.4v5 M4.3 -35.4v5 M-2.7 -60.4h5 M29.3 -60.4h5 M6.4 -67.4v5 M6.4 -35.4v5 M-2.7 -58.3h5 M29.3 -58.3h5 M8.5 -67.4v5 M8.5 -35.4v5 M-2.7 -56.2h5 M29.3 -56.2h5 M10.6 -67.4v5 M10.6 -35.4v5 M-2.7 -54.1h5 M29.3 -54.1h5 M12.7 -67.4v5 M12.7 -35.4v5 M-2.7 -52.0h5 M29.3 -52.0h5 M14.8 -67.4v5 M14.8 -35.4v5 M-2.7 -49.9h5 M29.3 -49.9h5 M16.8 -67.4v5 M16.8 -35.4v5 M-2.7 -47.9h5 M29.3 -47.9h5 M18.9 -67.4v5 M18.9 -35.4v5 M-2.7 -45.8h5 M29.3 -45.8h5 M21.0 -67.4v5 M21.0 -35.4v5 M-2.7 -43.7h5 M29.3 -43.7h5 M23.1 -67.4v5 M23.1 -35.4v5 M-2.7 -41.6h5 M29.3 -41.6h5 M25.2 -67.4v5 M25.2 -35.4v5 M-2.7 -39.5h5 M29.3 -39.5h5 M27.3 -67.4v5 M27.3 -35.4v5 M-2.7 -37.4h5 M29.3 -37.4h5" stroke="#b9bcae" stroke-width="1.0"/>
<rect x="2.3" y="-62.4" width="27" height="27" fill="#3b3e3d"/>
<path d="M-4.4 33.1v5 M-4.4 64.1v5 M-11.4 40.1h5 M19.6 40.1h5 M-2.4 33.1v5 M-2.4 64.1v5 M-11.4 42.1h5 M19.6 42.1h5 M-0.4 33.1v5 M-0.4 64.1v5 M-11.4 44.1h5 M19.6 44.1h5 M1.6 33.1v5 M1.6 64.1v5 M-11.4 46.1h5 M19.6 46.1h5 M3.6 33.1v5 M3.6 64.1v5 M-11.4 48.1h5 M19.6 48.1h5 M5.6 33.1v5 M5.6 64.1v5 M-11.4 50.1h5 M19.6 50.1h5 M7.6 33.1v5 M7.6 64.1v5 M-11.4 52.1h5 M19.6 52.1h5 M9.6 33.1v5 M9.6 64.1v5 M-11.4 54.1h5 M19.6 54.1h5 M11.6 33.1v5 M11.6 64.1v5 M-11.4 56.1h5 M19.6 56.1h5 M13.6 33.1v5 M13.6 64.1v5 M-11.4 58.1h5 M19.6 58.1h5 M15.6 33.1v5 M15.6 64.1v5 M-11.4 60.1h5 M19.6 60.1h5 M17.6 33.1v5 M17.6 64.1v5 M-11.4 62.1h5 M19.6 62.1h5" stroke="#b9bcae" stroke-width="1.0"/>
<rect x="-6.4" y="38.1" width="26" height="26" fill="#3b3e3d"/>
<g fill="#d6b84a">
<circle cx="70.4" cy="-5.1" r="2.2"/>
<circle cx="64" cy="-8" r="2.2"/>
<circle cx="58" cy="-11" r="2.2"/>
<circle cx="52" cy="-14" r="2.2"/>
<circle cx="60" cy="22" r="2.2"/>
<circle cx="52" cy="28" r="2.2"/>
<circle cx="-58" cy="40" r="2.2"/>
<circle cx="-52" cy="44" r="2.2"/>
<circle cx="-46" cy="48" r="2.2"/>
<circle cx="-40" cy="52" r="2.2"/>
</g>
<circle cx="-67" cy="-67" r="7" fill="#e2c866"/><circle cx="-67" cy="-67" r="4.06" fill="#1c1c1c"/>
<circle cx="67" cy="-67" r="7" fill="#e2c866"/><circle cx="67" cy="-67" r="4.06" fill="#1c1c1c"/>
<circle cx="-67" cy="67" r="7" fill="#e2c866"/><circle cx="-67" cy="67" r="4.06" fill="#1c1c1c"/>
<circle cx="67" cy="67" r="7" fill="#e2c866"/><circle cx="67" cy="67" r="4.06" fill="#1c1c1c"/>
<circle cx="39.7" cy="0" r="6.5" fill="#e2c866"/><circle cx="39.7" cy="0" r="3.77" fill="#1c1c1c"/>
<circle cx="-42.2" cy="0.2" r="6.5" fill="#e2c866"/><circle cx="-42.2" cy="0.2" r="3.77" fill="#1c1c1c"/>
</g></svg>
<div class="t" style="left:92.10px;top:81.21px;font-size:22.2px;line-height:22.2px;color:#3b5bdb;font-weight:700;letter-spacing:-0.006px;">Build Order: BO0011</div>
<div class="t" style="left:91.00px;top:126.95px;font-size:16.6px;line-height:16.6px;color:#c9c9c9;font-weight:400;letter-spacing:0.091px;">50 x TB1 | Test Board 1</div>
<div class="r" style="left:1252px;top:72px;width:142px;height:32px;background:#1971c2;border-radius:16px;"></div>
<div class="t" style="left:1267.80px;top:82.13px;font-size:15.2px;line-height:15.2px;color:#ffffff;font-weight:700;letter-spacing:0.833px;-webkit-text-stroke:0.2px #fff;">PRODUCTION</div>
<div class="r" style="left:1439px;top:72px;width:197px;height:45px;background:#2f9e44;border-radius:5px;"></div>
<svg class="i" style="left:1452.00px;top:79.00px" width="30" height="30" viewBox="0 0 24 24" fill="none" stroke="#ffffff" stroke-width="2.0" stroke-linecap="round" stroke-linejoin="round"><path d="M3 12a9 9 0 1 0 18 0a9 9 0 1 0 -18 0"/><path d="M9 12l2 2l4 -4"/></svg>
<div class="t" style="left:1495.30px;top:87.30px;font-size:17.6px;line-height:17.6px;color:#ffffff;font-weight:400;letter-spacing:0.108px;-webkit-text-stroke:0.45px #ffffff;">Complete Order</div>
<div class="r" style="left:1642px;top:72px;width:62px;height:45px;background:#2a2e44;border-radius:4px;"></div>
<svg class="i" style="left:1643.50px;top:79.30px" width="29" height="29" viewBox="0 0 24 24" fill="none" stroke="#91a7ff" stroke-width="2" stroke-linecap="round" stroke-linejoin="round"><path d="M4 5a1 1 0 0 1 1 -1h4a1 1 0 0 1 1 1v4a1 1 0 0 1 -1 1h-4a1 1 0 0 1 -1 -1z"/><path d="M7 17l0 .01"/><path d="M14 5a1 1 0 0 1 1 -1h4a1 1 0 0 1 1 1v4a1 1 0 0 1 -1 1h-4a1 1 0 0 1 -1 -1z"/><path d="M7 7l0 .01"/><path d="M4 15a1 1 0 0 1 1 -1h4a1 1 0 0 1 1 1v4a1 1 0 0 1 -1 1h-4a1 1 0 0 1 -1 -1z"/><path d="M17 7l0 .01"/><path d="M14 14l3 0"/><path d="M20 14l0 .01"/><path d="M14 14l0 3"/><path d="M14 20l3 0"/><path d="M17 17l3 0"/><path d="M20 17l0 3"/></svg>
<svg class="i" style="left:1674.50px;top:80.50px" width="27" height="27" viewBox="0 0 24 24" fill="none" stroke="#91a7ff" stroke-width="2" stroke-linecap="round" stroke-linejoin="round"><path d="M6 9l6 6l6 -6"/></svg>
<div class="r" style="left:1710px;top:72px;width:62px;height:45px;background:#2a2e44;border-radius:4px;"></div>
<svg class="i" style="left:1711.00px;top:79.00px" width="30" height="30" viewBox="0 0 24 24" fill="none" stroke="#91a7ff" stroke-width="2" stroke-linecap="round" stroke-linejoin="round"><path d="M17 17h2a2 2 0 0 0 2 -2v-4a2 2 0 0 0 -2 -2h-14a2 2 0 0 0 -2 2v4a2 2 0 0 0 2 2h2"/><path d="M17 9v-4a2 2 0 0 0 -2 -2h-6a2 2 0 0 0 -2 2v4"/><path d="M7 15a2 2 0 0 1 2 -2h6a2 2 0 0 1 2 2v4a2 2 0 0 1 -2 2h-6a2 2 0 0 1 -2 -2z"/></svg>
<svg class="i" style="left:1742.50px;top:80.50px" width="27" height="27" viewBox="0 0 24 24" fill="none" stroke="#91a7ff" stroke-width="2" stroke-linecap="round" stroke-linejoin="round"><path d="M6 9l6 6l6 -6"/></svg>
<div class="r" style="left:1792.4px;top:82.4px;width:5.6px;height:5.6px;border-radius:3px;background:#91a7ff"></div>
<div class="r" style="left:1792.4px;top:91.3px;width:5.6px;height:5.6px;border-radius:3px;background:#91a7ff"></div>
<div class="r" style="left:1792.4px;top:100.0px;width:5.6px;height:5.6px;border-radius:3px;background:#91a7ff"></div>
<div class="r" style="left:22px;top:186px;width:244px;height:55px;background:#2a2e44;border-radius:0px;border-radius:3px 0 0 3px;"></div>
<div class="r" style="left:266px;top:186px;width:2px;height:616px;background:#424242;border-radius:0px;"></div>
<div class="r" style="left:266px;top:186px;width:2px;height:55px;background:#4263eb;border-radius:0px;"></div>
<svg class="i" style="left:35.00px;top:197.80px" width="30" height="30" viewBox="0 0 24 24" fill="none" stroke="#c9c9c9" stroke-width="2.0" stroke-linecap="round" stroke-linejoin="round"><path d="M3 12a9 9 0 1 0 18 0a9 9 0 0 0 -18 0"/><path d="M12 9h.01"/><path d="M11 12h1v4h1"/></svg>
<div class="t" style="left:76.80px;top:205.68px;font-size:19.4px;line-height:19.4px;color:#c9c9c9;font-weight:400;letter-spacing:0.15px;">Build Details</div>
<svg class="i" style="left:35.00px;top:252.80px" width="30" height="30" viewBox="0 0 24 24" fill="none" stroke="#c9c9c9" stroke-width="2.0" stroke-linecap="round" stroke-linejoin="round"><path d="M11 6h9"/><path d="M11 12h9"/><path d="M12 18h8"/><path d="M4 16a2 2 0 1 1 4 0c0 .591 -.5 1 -1 1.5l-3 2.5h4"/><path d="M6 10v-6l-2 2"/></svg>
<div class="t" style="left:76.80px;top:260.68px;font-size:19.4px;line-height:19.4px;color:#c9c9c9;font-weight:400;letter-spacing:-0.177px;">Required Parts</div>
<svg class="i" style="left:35.00px;top:307.80px" width="30" height="30" viewBox="0 0 24 24" fill="none" stroke="#c9c9c9" stroke-width="2.0" stroke-linecap="round" stroke-linejoin="round"><path d="M9 6l11 0"/><path d="M9 12l11 0"/><path d="M9 18l11 0"/><path d="M5 6l0 .01"/><path d="M5 12l0 .01"/><path d="M5 18l0 .01"/></svg>
<div class="t" style="left:77.80px;top:315.68px;font-size:19.4px;line-height:19.4px;color:#c9c9c9;font-weight:400;letter-spacing:0.071px;">Allocated Stock</div>
<svg class="i" style="left:35.00px;top:362.80px" width="30" height="30" viewBox="0 0 24 24" fill="none" stroke="#c9c9c9" stroke-width="2.0" stroke-linecap="round" stroke-linejoin="round"><path d="M3.5 5.5l1.5 1.5l2.5 -2.5"/><path d="M3.5 11.5l1.5 1.5l2.5 -2.5"/><path d="M3.5 17.5l1.5 1.5l2.5 -2.5"/><path d="M11 6l9 0"/><path d="M11 12l9 0"/><path d="M11 18l9 0"/></svg>
<div class="t" style="left:76.80px;top:370.68px;font-size:19.4px;line-height:19.4px;color:#c9c9c9;font-weight:400;letter-spacing:-0.015px;">Consumed Stock</div>
<svg class="i" style="left:35.00px;top:417.80px" width="30" height="30" viewBox="0 0 24 24" fill="none" stroke="#c9c9c9" stroke-width="2.0" stroke-linecap="round" stroke-linejoin="round"><path d="M9 5h-2a2 2 0 0 0 -2 2v12a2 2 0 0 0 2 2h10a2 2 0 0 0 2 -2v-12a2 2 0 0 0 -2 -2h-2"/><path d="M9 5a2 2 0 0 1 2 -2h2a2 2 0 0 1 2 2v0a2 2 0 0 1 -2 2h-2a2 2 0 0 1 -2 -2z"/><path d="M9 12l.01 0"/><path d="M13 12l2 0"/><path d="M9 16l.01 0"/><path d="M13 16l2 0"/></svg>
<div class="t" style="left:76.80px;top:425.68px;font-size:19.4px;line-height:19.4px;color:#c9c9c9;font-weight:400;letter-spacing:0.465px;">Incomplete Outputs</div>
<svg class="i" style="left:35.00px;top:472.80px" width="30" height="30" viewBox="0 0 24 24" fill="none" stroke="#c9c9c9" stroke-width="2.0" stroke-linecap="round" stroke-linejoin="round"><path d="M9 5h-2a2 2 0 0 0 -2 2v12a2 2 0 0 0 2 2h10a2 2 0 0 0 2 -2v-12a2 2 0 0 0 -2 -2h-2"/><path d="M9 5a2 2 0 0 1 2 -2h2a2 2 0 0 1 2 2v0a2 2 0 0 1 -2 2h-2a2 2 0 0 1 -2 -2z"/><path d="M9 14l2 2l4 -4"/></svg>
<div class="t" style="left:76.80px;top:480.68px;font-size:19.4px;line-height:19.4px;color:#c9c9c9;font-weight:400;letter-spacing:0.419px;">Completed Outputs</div>
<svg class="i" style="left:35.00px;top:527.80px" width="30" height="30" viewBox="0 0 24 24" fill="none" stroke="#c9c9c9" stroke-width="2.0" stroke-linecap="round" stroke-linejoin="round"><path d="M3 17a2 2 0 0 1 2 -2h2a2 2 0 0 1 2 2v2a2 2 0 0 1 -2 2h-2a2 2 0 0 1 -2 -2z"/><path d="M15 17a2 2 0 0 1 2 -2h2a2 2 0 0 1 2 2v2a2 2 0 0 1 -2 2h-2a2 2 0 0 1 -2 -2z"/><path d="M9 5a2 2 0 0 1 2 -2h2a2 2 0 0 1 2 2v2a2 2 0 0 1 -2 2h-2a2 2 0 0 1 -2 -2z"/><path d="M6 15v-1a2 2 0 0 1 2 -2h8a2 2 0 0 1 2 2v1"/><path d="M12 9l0 3"/></svg>
<div class="t" style="left:76.80px;top:535.68px;font-size:19.4px;line-height:19.4px;color:#c9c9c9;font-weight:400;letter-spacing:0.141px;">Child Build Orders</div>
<svg class="i" style="left:35.00px;top:582.80px" width="30" height="30" viewBox="0 0 24 24" fill="none" stroke="#c9c9c9" stroke-width="2.0" stroke-linecap="round" stroke-linejoin="round"><path d="M9.615 20h-2.615a2 2 0 0 1 -2 -2v-12a2 2 0 0 1 2 -2h8a2 2 0 0 1 2 2v8"/><path d="M14 19l2 2l4 -4"/><path d="M9 8h4"/><path d="M9 12h2"/></svg>
<div class="t" style="left:77.80px;top:590.68px;font-size:19.4px;line-height:19.4px;color:#c9c9c9;font-weight:400;letter-spacing:-0.464px;">Test Results</div>
<svg class="i" style="left:35.00px;top:637.80px" width="30" height="30" viewBox="0 0 24 24" fill="none" stroke="#c9c9c9" stroke-width="2.0" stroke-linecap="round" stroke-linejoin="round"><path d="M15 7l-6.5 6.5a1.5 1.5 0 0 0 3 3l6.5 -6.5a3 3 0 0 0 -6 -6l-6.5 6.5a4.5 4.5 0 0 0 9 9l6.5 -6.5"/></svg>
<div class="t" style="left:77.80px;top:645.68px;font-size:19.4px;line-height:19.4px;color:#c9c9c9;font-weight:400;letter-spacing:0.29px;">Attachments</div>
<svg class="i" style="left:35.00px;top:692.80px" width="30" height="30" viewBox="0 0 24 24" fill="none" stroke="#c9c9c9" stroke-width="2.0" stroke-linecap="round" stroke-linejoin="round"><path d="M5 5a2 2 0 0 1 2 -2h10a2 2 0 0 1 2 2v14a2 2 0 0 1 -2 2h-10a2 2 0 0 1 -2 -2z"/><path d="M9 7l6 0"/><path d="M9 11l6 0"/><path d="M9 15l4 0"/></svg>
<div class="t" style="left:76.80px;top:700.68px;font-size:19.4px;line-height:19.4px;color:#c9c9c9;font-weight:400;letter-spacing:0.475px;">Notes</div>
<div class="r" style="left:22px;top:736px;width:244px;height:1px;background:#424242;border-radius:0px;"></div>
<svg class="i" style="left:36.25px;top:744.05px" width="27.5" height="27.5" viewBox="0 0 24 24" fill="none" stroke="#7a8ee6" stroke-width="1.8" stroke-linecap="round" stroke-linejoin="round"><path d="M4 6a2 2 0 0 1 2 -2h12a2 2 0 0 1 2 2v12a2 2 0 0 1 -2 2h-12a2 2 0 0 1 -2 -2z"/><path d="M9 4v16"/><path d="M15 10l-2 2l2 2"/></svg>
<div class="t" style="left:282.80px;top:211.60px;font-size:24.1px;line-height:24.1px;color:#3b5bdb;font-weight:700;letter-spacing:0.192px;">Build Details</div>
<div class="r" style="left:283px;top:262px;width:1510px;height:1px;background:#424242;border-radius:0px;"></div>
<svg class="i" style="left:0;top:0" width="1821" height="812" viewBox="0 0 1821 812"><g transform="translate(404.7,405.7) rotate(-35.8) scale(1.0)">
<rect x="-77.5" y="-77.5" width="155" height="155" rx="2" fill="#27a637"/>
<rect x="-75" y="-75" width="150" height="150" fill="#2cb03d"/>
<path d="M-24.7 -48.9 L-51.8 -48.9 L-51.8 -29.6 L-72.0 -29.6 L-72.0 -24.6" stroke="#17802a" stroke-width="0.8" fill="none"/>
<path d="M-58.0 -11.5 L-72.0 -11.5 L-72.0 -16.0" stroke="#17802a" stroke-width="0.8" fill="none"/>
<path d="M18.3 11.6 L22.9 11.6 L22.9 5.4" stroke="#17802a" stroke-width="0.8" fill="none"/>
<path d="M7.9 -51.4 L-13.4 -51.4 L-13.4 -72.0 L-24.9 -72.0" stroke="#17802a" stroke-width="0.8" fill="none"/>
<path d="M11.4 19.4 L-12.7 19.4 L-12.7 32.2 L-8.9 32.2" stroke="#17802a" stroke-width="1.1" fill="none"/>
<path d="M25.3 -10.1 L23.2 -10.1 L23.2 15.3 L14.9 15.3" stroke="#17802a" stroke-width="0.8" fill="none"/>
<path d="M27.9 -35.8 L15.9 -35.8 L15.9 -36.1 L6.5 -36.1 L6.5 -39.2" stroke="#17802a" stroke-width="0.8" fill="none"/>
<path d="M1.7 -46.9 L-19.2 -46.9 L-19.2 -47.6 L-46.9 -47.6" stroke="#17802a" stroke-width="1.4" fill="none"/>
<path d="M10.2 52.6 L0.6 52.6 L0.6 43.6 L0.4 43.6" stroke="#5ad065" stroke-width="0.8" fill="none"/>
<path d="M47.6 62.3 L59.4 62.3 L59.4 36.2 L72.0 36.2" stroke="#1a8a2c" stroke-width="1.4" fill="none"/>
<path d="M10.9 25.4 L-2.0 25.4 L-2.0 18.5 L8.1 18.5" stroke="#17802a" stroke-width="1.1" fill="none"/>
<path d="M-20.2 15.5 L-46.7 15.5 L-46.7 31.6 L-68.9 31.6" stroke="#17802a" stroke-width="1.1" fill="none"/>
<path d="M-15.3 52.0 L-35.3 52.0 L-35.3 46.1" stroke="#1a8a2c" stroke-width="0.8" fill="none"/>
<path d="M44.7 51.0 L57.1 51.0 L57.1 72.0 L68.0 72.0" stroke="#5ad065" stroke-width="0.8" fill="none"/>
<path d="M-48.9 -45.3 L-39.4 -45.3 L-39.4 -72.0" stroke="#17802a" stroke-width="1.1" fill="none"/>
<path d="M-30.5 -49.6 L-38.4 -49.6 L-38.4 -45.6 L-11.2 -45.6 L-11.2 -34.2" stroke="#17802a" stroke-width="1.1" fill="none"/>
<path d="M55.9 39.2 L72.0 39.2 L72.0 32.7 L65.9 32.7 L65.9 9.0" stroke="#5ad065" stroke-width="0.8" fill="none"/>
<path d="M-43.3 67.9 L-63.6 67.9 L-63.6 58.3 L-72.0 58.3" stroke="#17802a" stroke-width="1.4" fill="none"/>
<path d="M-48.8 -55.8 L-42.0 -55.8 L-42.0 -72.0 L-59.5 -72.0" stroke="#5ad065" stroke-width="0.8" fill="none"/>
<path d="M18.8 63.8 L10.7 63.8 L10.7 41.1 L31.6 41.1 L31.6 70.7" stroke="#5ad065" stroke-width="1.1" fill="none"/>
<path d="M-2.3 -58.0 L12.7 -58.0 L12.7 -43.6" stroke="#5ad065" stroke-width="1.4" fill="none"/>
<path d="M-47.4 -66.8 L-55.7 -66.8 L-55.7 -55.4 L-30.8 -55.4 L-30.8 -39.9" stroke="#1a8a2c" stroke-width="1.4" fill="none"/>
<path d="M50.9 27.5 L52.0 27.5 L52.0 52.0 L43.3 52.0" stroke="#17802a" stroke-width="1.4" fill="none"/>
<path d="M5.8 0.4 L-10.8 0.4 L-10.8 19.1 L18.3 19.1 L18.3 40.2" stroke="#17802a" stroke-width="1.1" fill="none"/>
<path d="M33.6 -38.3 L33.1 -38.3 L33.1 -24.4 L62.5 -24.4 L62.5 -7.0" stroke="#5ad065" stroke-width="1.1" fill="none"/>
<path d="M-42.9 14.7 L-46.1 14.7 L-46.1 40.9 L-16.8 40.9" stroke="#1a8a2c" stroke-width="0.8" fill="none"/>
<path d="M-39.1 -38.2 L-48.9 -38.2 L-48.9 -39.3" stroke="#17802a" stroke-width="1.1" fill="none"/>
<path d="M57.3 -21.8 L32.4 -21.8 L32.4 -12.2 L57.0 -12.2 L57.0 4.7" stroke="#17802a" stroke-width="1.1" fill="none"/>
<path d="M54.5 -9.3 L44.4 -9.3 L44.4 8.8 L72.0 8.8 L72.0 2.5" stroke="#5ad065" stroke-width="1.4" fill="none"/>
<path d="M62.6 31.5 L72.0 31.5 L72.0 3.1" stroke="#5ad065" stroke-width="1.4" fill="none"/>
<path d="M-49.5 45.7 L-40.1 45.7 L-40.1 36.7 L-37.2 36.7" stroke="#17802a" stroke-width="0.8" fill="none"/>
<path d="M-68.0 65.9 L-72.0 65.9 L-72.0 72.0 L-72.0 72.0 L-72.0 72.0" stroke="#17802a" stroke-width="0.8" fill="none"/>
<path d="M-66.1 -40.2 L-72.0 -40.2 L-72.0 -35.0 L-72.0 -35.0 L-72.0 -39.9" stroke="#17802a" stroke-width="0.8" fill="none"/>
<path d="M57.4 -20.5 L67.2 -20.5 L67.2 -1.6 L68.2 -1.6" stroke="#17802a" stroke-width="1.4" fill="none"/>
<path d="M-48.7 1.5 L-32.2 1.5 L-32.2 8.0 L-15.6 8.0" stroke="#17802a" stroke-width="0.8" fill="none"/>
<path d="M-50.2 16.7 L-46.8 16.7 L-46.8 6.2" stroke="#5ad065" stroke-width="0.8" fill="none"/>
<path d="M53.7 -62.0 L40.3 -62.0 L40.3 -45.7" stroke="#5ad065" stroke-width="1.4" fill="none"/>
<path d="M-66.1 55.2 L-69.5 55.2 L-69.5 61.9" stroke="#17802a" stroke-width="1.4" fill="none"/>
<path d="M-31.2 1.1 L-30.7 1.1 L-30.7 -14.0 L-29.3 -14.0" stroke="#1a8a2c" stroke-width="1.4" fill="none"/>
<path d="M55.0 -41.6 L33.2 -41.6 L33.2 -64.3 L29.7 -64.3" stroke="#17802a" stroke-width="1.4" fill="none"/>
<path d="M-36.3 -59.8 L-48.1 -59.8 L-48.1 -72.0 L-31.5 -72.0 L-31.5 -45.6" stroke="#1a8a2c" stroke-width="0.8" fill="none"/>
<path d="M-34.6 -50.8 L-51.4 -50.8 L-51.4 -23.6 L-57.5 -23.6" stroke="#5ad065" stroke-width="0.8" fill="none"/>
<path d="M68.6 46.5 L72.0 46.5 L72.0 72.0" stroke="#5ad065" stroke-width="1.1" fill="none"/>
<path d="M-11.0 -20.1 L2.3 -20.1 L2.3 -48.9" stroke="#5ad065" stroke-width="1.1" fill="none"/>
<path d="M28.4 -16.2 L35.9 -16.2 L35.9 -15.5 L9.7 -15.5 L9.7 13.6" stroke="#17802a" stroke-width="0.8" fill="none"/>
<path d="M-58.2 -31.9 L-72.0 -31.9 L-72.0 -54.2" stroke="#5ad065" stroke-width="1.4" fill="none"/>
<path d="M44.7 -33.8 L46.9 -33.8 L46.9 -32.9" stroke="#5ad065" stroke-width="1.4" fill="none"/>
<path d="M-24.2 -30.9 L-43.2 -30.9 L-43.2 -7.2 L-57.1 -7.2 L-57.1 -36.2" stroke="#17802a" stroke-width="1.1" fill="none"/>
<path d="M-58.3 49.9 L-72.0 49.9 L-72.0 27.2" stroke="#17802a" stroke-width="1.1" fill="none"/>
<path d="M69.2 -11.5 L72.0 -11.5 L72.0 -38.9 L72.0 -38.9" stroke="#17802a" stroke-width="0.8" fill="none"/>
<path d="M-33.3 -44.6 L-25.6 -44.6 L-25.6 -42.8 L-43.3 -42.8" stroke="#5ad065" stroke-width="1.4" fill="none"/>
<path d="M24.1 -32.1 L53.8 -32.1 L53.8 -59.9" stroke="#17802a" stroke-width="1.4" fill="none"/>
<path d="M0.8 66.9 L-0.7 66.9 L-0.7 72.0 L-24.3 72.0 L-24.3 72.0" stroke="#5ad065" stroke-width="1.4" fill="none"/>
<path d="M-0.7 46.8 L27.5 46.8 L27.5 35.3 L10.4 35.3" stroke="#17802a" stroke-width="1.1" fill="none"/>
<path d="M-42.2 53.5 L-34.0 53.5 L-34.0 47.8 L-43.2 47.8 L-43.2 21.0" stroke="#17802a" stroke-width="0.8" fill="none"/>
<path d="M-60.1 33.7 L-64.3 33.7 L-64.3 7.0 L-54.3 7.0" stroke="#5ad065" stroke-width="1.4" fill="none"/>
<path d="M23.9 -30.5 L35.4 -30.5 L35.4 -57.8" stroke="#17802a" stroke-width="0.8" fill="none"/>
<path d="M-32.3 -69.5 L-4.6 -69.5 L-4.6 -41.1 L-1.8 -41.1" stroke="#17802a" stroke-width="0.8" fill="none"/>
<path d="M65.2 -26.7 L46.2 -26.7 L46.2 -36.5 L21.2 -36.5" stroke="#1a8a2c" stroke-width="1.4" fill="none"/>
<path d="M21.8 -35.3 L-2.7 -35.3 L-2.7 -16.2" stroke="#17802a" stroke-width="1.1" fill="none"/>
<path d="M12.2 -14.8 L0.4 -14.8 L0.4 -30.9 L5.5 -30.9" stroke="#17802a" stroke-width="1.4" fill="none"/>
<path d="M55.0 39.8 L48.4 39.8 L48.4 29.3 L72.0 29.3 L72.0 8.3" stroke="#17802a" stroke-width="0.8" fill="none"/>
<path d="M45.5 30.1 L53.1 30.1 L53.1 44.1 L71.9 44.1 L71.9 22.5" stroke="#17802a" stroke-width="1.4" fill="none"/>
<path d="M11.8 55.0 L39.1 55.0 L39.1 63.6 L14.2 63.6 L14.2 36.1" stroke="#1a8a2c" stroke-width="0.8" fill="none"/>
<path d="M-17.3 -6.8 L-9.6 -6.8 L-9.6 0.8" stroke="#17802a" stroke-width="1.1" fill="none"/>
<path d="M-33.1 -6.0 L-18.2 -6.0 L-18.2 -5.8" stroke="#17802a" stroke-width="1.4" fill="none"/>
<path d="M3.6 34.4 L-11.2 34.4 L-11.2 8.9 L-25.3 8.9" stroke="#17802a" stroke-width="0.8" fill="none"/>
<path d="M33.6 66.6 L54.3 66.6 L54.3 41.2 L72.0 41.2" stroke="#1a8a2c" stroke-width="0.8" fill="none"/>
<path d="M16.4 20.0 L22.4 20.0 L22.4 9.9" stroke="#1a8a2c" stroke-width="1.4" fill="none"/>
<path d="M9.5 -68.3 L8.6 -68.3 L8.6 -39.9" stroke="#17802a" stroke-width="1.4" fill="none"/>
<path d="M-39.5 -1.5 L-38.5 -1.5 L-38.5 -3.6 L-40.6 -3.6 L-40.6 -26.5" stroke="#17802a" stroke-width="1.1" fill="none"/>
<path d="M66.9 61.1 L54.3 61.1 L54.3 35.7" stroke="#5ad065" stroke-width="1.1" fill="none"/>
<path d="M-15.8 58.3 L-41.4 58.3 L-41.4 33.7" stroke="#1a8a2c" stroke-width="1.1" fill="none"/>
<path d="M-51.4 44.8 L-64.7 44.8 L-64.7 21.6 L-72.0 21.6 L-72.0 21.5" stroke="#5ad065" stroke-width="1.1" fill="none"/>
<path d="M-66.5 -69.5 L-55.6 -69.5 L-55.6 -72.0 L-42.0 -72.0" stroke="#5ad065" stroke-width="1.1" fill="none"/>
<path d="M-17.3 -53.1 L-47.2 -53.1 L-47.2 -38.0 L-26.9 -38.0" stroke="#17802a" stroke-width="0.8" fill="none"/>
<path d="M29.8 56.2 L15.0 56.2 L15.0 30.1 L8.4 30.1" stroke="#17802a" stroke-width="1.1" fill="none"/>
<path d="M59.6 35.8 L46.4 35.8 L46.4 8.9" stroke="#1a8a2c" stroke-width="1.4" fill="none"/>
<path d="M61.0 -35.1 L57.2 -35.1 L57.2 -46.2 L72.0 -46.2" stroke="#5ad065" stroke-width="0.8" fill="none"/>
<path d="M43.7 18.3 L46.6 18.3 L46.6 31.5 L19.6 31.5 L19.6 45.4" stroke="#5ad065" stroke-width="1.4" fill="none"/>
<path d="M35.4 20.2 L34.5 20.2 L34.5 44.9 L37.5 44.9" stroke="#17802a" stroke-width="1.1" fill="none"/>
<path d="M-11.9 -30.6 L2.4 -30.6 L2.4 -2.0 L-12.0 -2.0" stroke="#17802a" stroke-width="1.1" fill="none"/>
<path d="M-2.4 23.6 L-22.3 23.6 L-22.3 3.3" stroke="#17802a" stroke-width="1.4" fill="none"/>
<path d="M56.8 -0.4 L54.0 -0.4 L54.0 -10.4" stroke="#5ad065" stroke-width="1.1" fill="none"/>
<path d="M-50.5 -43.1 L-70.0 -43.1 L-70.0 -39.7" stroke="#1a8a2c" stroke-width="0.8" fill="none"/>
<path d="M-18.4 43.3 L4.8 43.3 L4.8 58.3" stroke="#5ad065" stroke-width="1.1" fill="none"/>
<path d="M-12.1 3.4 L-25.8 3.4 L-25.8 18.5 L-26.0 18.5" stroke="#1a8a2c" stroke-width="0.8" fill="none"/>
<path d="M26.1 4.1 L1.7 4.1 L1.7 27.9" stroke="#5ad065" stroke-width="1.1" fill="none"/>
<path d="M20.4 -9.5 L41.3 -9.5 L41.3 12.8 L12.6 12.8" stroke="#17802a" stroke-width="1.1" fill="none"/>
<path d="M29.3 55.4 L57.4 55.4 L57.4 54.8 L31.8 54.8" stroke="#5ad065" stroke-width="1.1" fill="none"/>
<path d="M-35.2 -54.7 L-56.1 -54.7 L-56.1 -26.4" stroke="#17802a" stroke-width="1.4" fill="none"/>
<path d="M28.1 48.5 L3.2 48.5 L3.2 65.1 L-26.7 65.1" stroke="#17802a" stroke-width="0.8" fill="none"/>
<path d="M9.7 -64.7 L-2.1 -64.7 L-2.1 -72.0 L-17.0 -72.0 L-17.0 -63.8" stroke="#17802a" stroke-width="0.8" fill="none"/>
<path d="M-60.2 3.4 L-72.0 3.4 L-72.0 -10.9 L-54.6 -10.9 L-54.6 -40.9" stroke="#1a8a2c" stroke-width="1.1" fill="none"/>
<path d="M-31.0 -25.7 L-32.5 -25.7 L-32.5 -41.6" stroke="#17802a" stroke-width="0.8" fill="none"/>
<path d="M64.5 28.7 L37.8 28.7 L37.8 10.3 L60.9 10.3" stroke="#5ad065" stroke-width="0.8" fill="none"/>
<path d="M-34.0 23.4 L-50.4 23.4 L-50.4 -4.5 L-60.1 -4.5" stroke="#5ad065" stroke-width="1.1" fill="none"/>
<path d="M25.6 -42.3 L39.9 -42.3 L39.9 -42.0 L22.2 -42.0" stroke="#17802a" stroke-width="1.1" fill="none"/>
<path d="M37.2 -42.8 L20.5 -42.8 L20.5 -27.2 L8.2 -27.2" stroke="#5ad065" stroke-width="1.4" fill="none"/>
<path d="M-43.8 -38.7 L-19.2 -38.7 L-19.2 -65.3 L-13.5 -65.3" stroke="#5ad065" stroke-width="0.8" fill="none"/>
<path d="M-40.2 66.4 L-45.3 66.4 L-45.3 72.0" stroke="#17802a" stroke-width="1.1" fill="none"/>
<path d="M-7.1 29.7 L6.9 29.7 L6.9 59.5 L32.8 59.5" stroke="#1a8a2c" stroke-width="0.8" fill="none"/>
<path d="M-44.0 61.0 L-46.0 61.0 L-46.0 49.7 L-32.4 49.7 L-32.4 70.1" stroke="#1a8a2c" stroke-width="1.1" fill="none"/>
<path d="M-46.3 -69.6 L-71.5 -69.6 L-71.5 -72.0 L-48.3 -72.0" stroke="#17802a" stroke-width="1.1" fill="none"/>
<path d="M-20.1 45.0 L-44.8 45.0 L-44.8 57.3 L-63.1 57.3" stroke="#5ad065" stroke-width="0.8" fill="none"/>
<path d="M-24.7 33.2 L-52.9 33.2 L-52.9 27.9 L-34.2 27.9" stroke="#5ad065" stroke-width="0.8" fill="none"/>
<path d="M-17.4 -5.0 L-32.0 -5.0 L-32.0 9.8" stroke="#1a8a2c" stroke-width="1.1" fill="none"/>
<path d="M-31.9 64.1 L-59.3 64.1 L-59.3 72.0 L-47.9 72.0 L-47.9 72.0" stroke="#1a8a2c" stroke-width="0.8" fill="none"/>
<path d="M31.0 13.4 L57.8 13.4 L57.8 -12.7 L72.0 -12.7 L72.0 -36.3" stroke="#5ad065" stroke-width="1.1" fill="none"/>
<path d="M40.6 57.9 L18.5 57.9 L18.5 57.7 L-10.9 57.7" stroke="#1a8a2c" stroke-width="1.4" fill="none"/>
<path d="M38.2 15.0 L59.9 15.0 L59.9 12.7 L72.0 12.7" stroke="#17802a" stroke-width="1.4" fill="none"/>
<path d="M-42.4 35.4 L-47.9 35.4 L-47.9 44.4" stroke="#5ad065" stroke-width="1.4" fill="none"/>
<path d="M6.2 -47.5 L29.3 -47.5 L29.3 -18.2 L15.1 -18.2" stroke="#17802a" stroke-width="0.8" fill="none"/>
<path d="M-56.5 -0.2 L-28.2 -0.2 L-28.2 -19.8 L-50.2 -19.8 L-50.2 -22.2" stroke="#17802a" stroke-width="1.4" fill="none"/>
<path d="M5.4 38.3 L22.2 38.3 L22.2 26.0" stroke="#1a8a2c" stroke-width="1.4" fill="none"/>
<path d="M-32.5 -34.4 L-50.6 -34.4 L-50.6 -49.6 L-65.9 -49.6" stroke="#17802a" stroke-width="1.1" fill="none"/>
<path d="M53.8 11.0 L27.7 11.0 L27.7 -3.9 L12.4 -3.9" stroke="#17802a" stroke-width="1.4" fill="none"/>
<path d="M43.2 21.5 L19.3 21.5 L19.3 20.0" stroke="#17802a" stroke-width="1.1" fill="none"/>
<path d="M58.0 -64.3 L42.0 -64.3 L42.0 -72.0 L48.0 -72.0" stroke="#17802a" stroke-width="0.8" fill="none"/>
<path d="M-17.9 51.3 L-11.7 51.3 L-11.7 67.8 L-1.8 67.8" stroke="#17802a" stroke-width="0.8" fill="none"/>
<path d="M19.2 29.4 L2.3 29.4 L2.3 21.5 L-19.2 21.5" stroke="#17802a" stroke-width="1.1" fill="none"/>
<path d="M-64.6 32.5 L-45.8 32.5 L-45.8 51.6" stroke="#5ad065" stroke-width="1.4" fill="none"/>
<path d="M-17.9 16.9 L-35.7 16.9 L-35.7 34.7" stroke="#5ad065" stroke-width="0.8" fill="none"/>
<path d="M-12.9 41.4 L-9.8 41.4 L-9.8 49.8 L-34.4 49.8 L-34.4 29.6" stroke="#1a8a2c" stroke-width="1.1" fill="none"/>
<path d="M68.4 23.5 L72.0 23.5 L72.0 12.2 L72.0 12.2" stroke="#1a8a2c" stroke-width="1.1" fill="none"/>
<path d="M-11.7 51.0 L-3.0 51.0 L-3.0 44.4 L-8.7 44.4" stroke="#17802a" stroke-width="1.1" fill="none"/>
<path d="M56.2 -10.7 L50.6 -10.7 L50.6 12.3" stroke="#5ad065" stroke-width="0.8" fill="none"/>
<path d="M-51.8 -62.8 L-43.4 -62.8 L-43.4 -38.2" stroke="#17802a" stroke-width="1.4" fill="none"/>
<path d="M17.1 -18.1 L-2.6 -18.1 L-2.6 -27.2 L-22.9 -27.2 L-22.9 -46.9" stroke="#17802a" stroke-width="0.8" fill="none"/>
<path d="M-16.3 35.5 L-28.2 35.5 L-28.2 55.7" stroke="#17802a" stroke-width="1.1" fill="none"/>
<path d="M-26.0 15.1 L-32.7 15.1 L-32.7 39.3 L-25.5 39.3 L-25.5 58.8" stroke="#17802a" stroke-width="1.4" fill="none"/>
<path d="M40.0 -38.9 L46.9 -38.9 L46.9 -57.1 L45.3 -57.1" stroke="#17802a" stroke-width="0.8" fill="none"/>
<path d="M-14.0 2.5 L-22.5 2.5 L-22.5 -18.5 L5.8 -18.5" stroke="#17802a" stroke-width="0.8" fill="none"/>
<path d="M53.7 47.9 L26.0 47.9 L26.0 68.2 L3.1 68.2 L3.1 72.0" stroke="#1a8a2c" stroke-width="1.4" fill="none"/>
<path d="M-11.2 11.6 L-17.8 11.6 L-17.8 3.6 L-17.6 3.6" stroke="#17802a" stroke-width="0.8" fill="none"/>
<path d="M-69.5 68.1 L-72.0 68.1 L-72.0 72.0 L-55.2 72.0" stroke="#5ad065" stroke-width="0.8" fill="none"/>
<path d="M43.5 -14.0 L21.2 -14.0 L21.2 -18.1" stroke="#17802a" stroke-width="1.1" fill="none"/>
<path d="M0.6 22.0 L8.8 22.0 L8.8 -3.1" stroke="#1a8a2c" stroke-width="1.4" fill="none"/>
<path d="M1.6 -62.4 L25.3 -62.4 L25.3 -53.2 L42.4 -53.2 L42.4 -72.0" stroke="#17802a" stroke-width="1.4" fill="none"/>
<path d="M32.5 44.1 L10.4 44.1 L10.4 67.2" stroke="#1a8a2c" stroke-width="0.8" fill="none"/>
<g stroke="#d8f0d8" stroke-width="0.9" fill="none" opacity="0.8">
<rect x="44" y="-30" width="26" height="34"/><rect x="40" y="8" width="30" height="28"/><rect x="-30" y="48" width="30" height="22"/>
</g>
<rect x="25.3" y="30.1" width="5" height="3" fill="#3a3d3b"/>
<rect x="-33.7" y="-24.0" width="8" height="5" fill="#3a3d3b"/>
<rect x="-33.4" y="63.1" width="7" height="4" fill="#3a3d3b"/>
<rect x="-35.7" y="-17.4" width="4" height="5" fill="#3a3d3b"/>
<rect x="-30.2" y="-23.4" width="7" height="4" fill="#a9b1aa"/><rect x="-28.4" y="-23.4" width="3.5" height="4" fill="#585e5a"/>
<rect x="36.5" y="-61.4" width="6" height="6" fill="#3a3d3b"/>
<rect x="52.0" y="-53.8" width="8" height="6" fill="#a9b1aa"/><rect x="54.0" y="-53.8" width="4.0" height="6" fill="#585e5a"/>
<rect x="-16.9" y="-17.8" width="5" height="5" fill="#a9b1aa"/><rect x="-15.6" y="-17.8" width="2.5" height="5" fill="#585e5a"/>
<rect x="-36.7" y="15.7" width="4" height="5" fill="#a9b1aa"/><rect x="-35.7" y="15.7" width="2.0" height="5" fill="#585e5a"/>
<rect x="11.7" y="22.3" width="6" height="3" fill="#a9b1aa"/><rect x="13.2" y="22.3" width="3.0" height="3" fill="#585e5a"/>
<rect x="-28.4" y="17.1" width="7" height="5" fill="#a9b1aa"/><rect x="-26.7" y="17.1" width="3.5" height="5" fill="#585e5a"/>
<rect x="-37.1" y="20.8" width="3" height="4" fill="#a9b1aa"/><rect x="-36.3" y="20.8" width="1.5" height="4" fill="#585e5a"/>
<rect x="-53.5" y="-19.4" width="5" height="6" fill="#3a3d3b"/>
<circle cx="-40.2" cy="16.9" r="1.6" fill="#8fd896"/>
<circle cx="-34.9" cy="-47.7" r="1.6" fill="#8fd896"/>
<rect x="38.4" y="-13.3" width="3" height="6" fill="#c9b58e"/>
<rect x="53.4" y="12.9" width="8" height="6" fill="#3a3d3b"/>
<rect x="-64.6" y="-42.8" width="5" height="3" fill="#a9b1aa"/><rect x="-63.3" y="-42.8" width="2.5" height="3" fill="#585e5a"/>
<rect x="15.3" y="21.3" width="4" height="5" fill="#3a3d3b"/>
<rect x="19.4" y="20.1" width="7" height="4" fill="#a9b1aa"/><rect x="21.2" y="20.1" width="3.5" height="4" fill="#585e5a"/>
<rect x="30.5" y="-3.0" width="3" height="8" fill="#a9b1aa"/><rect x="31.3" y="-3.0" width="1.5" height="8" fill="#585e5a"/>
<circle cx="56.1" cy="-57.1" r="1.6" fill="#8fd896"/>
<circle cx="-32.4" cy="19.6" r="1.6" fill="#8fd896"/>
<rect x="60.2" y="-32.2" width="4" height="5" fill="#3a3d3b"/>
<rect x="64.2" y="-27.8" width="5" height="3" fill="#a9b1aa"/><rect x="65.4" y="-27.8" width="2.5" height="3" fill="#585e5a"/>
<rect x="-32.6" y="-35.9" width="10" height="4" fill="#c9b58e"/>
<circle cx="-23.5" cy="51.7" r="1.6" fill="#8fd896"/>
<rect x="57.3" y="65.5" width="6" height="8" fill="#3a3d3b"/>
<rect x="62.0" y="-36.2" width="4" height="6" fill="#3a3d3b"/>
<rect x="-63.5" y="-52.8" width="4" height="8" fill="#a9b1aa"/><rect x="-62.5" y="-52.8" width="2.0" height="8" fill="#585e5a"/>
<rect x="26.2" y="18.2" width="10" height="3" fill="#a9b1aa"/><rect x="28.7" y="18.2" width="5.0" height="3" fill="#585e5a"/>
<rect x="12.3" y="-18.6" width="8" height="3" fill="#c9b58e"/>
<rect x="28.7" y="-15.8" width="4" height="5" fill="#a9b1aa"/><rect x="29.7" y="-15.8" width="2.0" height="5" fill="#585e5a"/>
<rect x="61.1" y="55.9" width="10" height="3" fill="#3a3d3b"/>
<rect x="-28.9" y="-54.4" width="4" height="4" fill="#a9b1aa"/><rect x="-27.9" y="-54.4" width="2.0" height="4" fill="#585e5a"/>
<rect x="-32.5" y="-20.3" width="6" height="3" fill="#a9b1aa"/><rect x="-31.0" y="-20.3" width="3.0" height="3" fill="#585e5a"/>
<rect x="-24.4" y="63.1" width="8" height="6" fill="#3a3d3b"/>
<rect x="-63.8" y="-11.8" width="3" height="7" fill="#c9b58e"/>
<rect x="49.3" y="-55.6" width="4" height="6" fill="#3a3d3b"/>
<rect x="-28.8" y="34.1" width="3" height="4" fill="#a9b1aa"/><rect x="-28.0" y="34.1" width="1.5" height="4" fill="#585e5a"/>
<rect x="26.5" y="44.2" width="7" height="5" fill="#3a3d3b"/>
<circle cx="42.9" cy="59.6" r="1.6" fill="#8fd896"/>
<rect x="36.3" y="-1.3" width="10" height="3" fill="#a9b1aa"/><rect x="38.8" y="-1.3" width="5.0" height="3" fill="#585e5a"/>
<rect x="-13.4" y="-14.3" width="3" height="10" fill="#3a3d3b"/>
<circle cx="-17.4" cy="-26.8" r="1.6" fill="#8fd896"/>
<rect x="-36.2" y="-5.3" width="3" height="8" fill="#a9b1aa"/><rect x="-35.5" y="-5.3" width="1.5" height="8" fill="#585e5a"/>
<rect x="-46.9" y="46.7" width="5" height="10" fill="#a9b1aa"/><rect x="-45.6" y="46.7" width="2.5" height="10" fill="#585e5a"/>
<circle cx="37.2" cy="10.8" r="1.6" fill="#8fd896"/>
<circle cx="-35.6" cy="-41.9" r="1.6" fill="#8fd896"/>
<circle cx="30.3" cy="14.0" r="1.6" fill="#8fd896"/>
<rect x="-32.8" y="61.9" width="4" height="4" fill="#a9b1aa"/><rect x="-31.8" y="61.9" width="2.0" height="4" fill="#585e5a"/>
<rect x="-15.7" y="65.8" width="5" height="6" fill="#a9b1aa"/><rect x="-14.5" y="65.8" width="2.5" height="6" fill="#585e5a"/>
<rect x="-39.9" y="-15.2" width="3" height="4" fill="#c9b58e"/>
<rect x="26.3" y="0.1" width="5" height="10" fill="#a9b1aa"/><rect x="27.6" y="0.1" width="2.5" height="10" fill="#585e5a"/>
<rect x="14.1" y="-13.0" width="10" height="4" fill="#a9b1aa"/><rect x="16.6" y="-13.0" width="5.0" height="4" fill="#585e5a"/>
<rect x="-10.7" y="-36.9" width="10" height="4" fill="#3a3d3b"/>
<rect x="-6.3" y="-25.4" width="10" height="3" fill="#a9b1aa"/><rect x="-3.8" y="-25.4" width="5.0" height="3" fill="#585e5a"/>
<rect x="-13.6" y="28.9" width="5" height="5" fill="#3a3d3b"/>
<rect x="-65.3" y="48.8" width="8" height="4" fill="#a9b1aa"/><rect x="-63.3" y="48.8" width="4.0" height="4" fill="#585e5a"/>
<rect x="-66.6" y="45.1" width="3" height="4" fill="#a9b1aa"/><rect x="-65.8" y="45.1" width="1.5" height="4" fill="#585e5a"/>
<rect x="29.4" y="61.4" width="5" height="5" fill="#3a3d3b"/>
<rect x="5.6" y="29.6" width="8" height="3" fill="#c9b58e"/>
<rect x="2.9" y="-12.2" width="7" height="4" fill="#a9b1aa"/><rect x="4.7" y="-12.2" width="3.5" height="4" fill="#585e5a"/>
<rect x="31.2" y="15.5" width="3" height="10" fill="#a9b1aa"/><rect x="31.9" y="15.5" width="1.5" height="10" fill="#585e5a"/>
<rect x="-59.6" y="-57.8" width="7" height="5" fill="#a9b1aa"/><rect x="-57.9" y="-57.8" width="3.5" height="5" fill="#585e5a"/>
<circle cx="-26.7" cy="-13.5" r="1.6" fill="#8fd896"/>
<rect x="-5.2" y="-45.6" width="4" height="4" fill="#3a3d3b"/>
<rect x="-37.3" y="63.1" width="6" height="6" fill="#a9b1aa"/><rect x="-35.8" y="63.1" width="3.0" height="6" fill="#585e5a"/>
<rect x="45.4" y="-19.8" width="5" height="5" fill="#3a3d3b"/>
<rect x="65.7" y="24.3" width="7" height="3" fill="#c9b58e"/>
<rect x="-19.3" y="21.0" width="6" height="6" fill="#3a3d3b"/>
<rect x="-56.4" y="54.0" width="5" height="5" fill="#a9b1aa"/><rect x="-55.1" y="54.0" width="2.5" height="5" fill="#585e5a"/>
<rect x="44.6" y="55.2" width="5" height="5" fill="#a9b1aa"/><rect x="45.8" y="55.2" width="2.5" height="5" fill="#585e5a"/>
<rect x="-54.2" y="-48.6" width="5" height="4" fill="#a9b1aa"/><rect x="-52.9" y="-48.6" width="2.5" height="4" fill="#585e5a"/>
<rect x="-47.2" y="55.0" width="8" height="4" fill="#3a3d3b"/>
<rect x="64.9" y="-55.7" width="5" height="8" fill="#3a3d3b"/>
<circle cx="-36.2" cy="-49.0" r="1.6" fill="#8fd896"/>
<rect x="-45.6" y="13.5" width="3" height="10" fill="#a9b1aa"/><rect x="-44.9" y="13.5" width="1.5" height="10" fill="#585e5a"/>
<rect x="26.6" y="-0.3" width="6" height="6" fill="#a9b1aa"/><rect x="28.1" y="-0.3" width="3.0" height="6" fill="#585e5a"/>
<rect x="62.6" y="-57.7" width="10" height="5" fill="#a9b1aa"/><rect x="65.1" y="-57.7" width="5.0" height="5" fill="#585e5a"/>
<rect x="14.9" y="24.8" width="6" height="3" fill="#3a3d3b"/>
<rect x="54.1" y="-63.4" width="10" height="6" fill="#a9b1aa"/><rect x="56.6" y="-63.4" width="5.0" height="6" fill="#585e5a"/>
<rect x="49.2" y="-18.2" width="4" height="7" fill="#a9b1aa"/><rect x="50.2" y="-18.2" width="2.0" height="7" fill="#585e5a"/>
<rect x="-33.8" y="-60.8" width="5" height="6" fill="#3a3d3b"/>
<rect x="-22.6" y="65.9" width="8" height="5" fill="#3a3d3b"/>
<circle cx="39.7" cy="-23.0" r="1.6" fill="#8fd896"/>
<rect x="-56.1" y="67.5" width="7" height="6" fill="#a9b1aa"/><rect x="-54.3" y="67.5" width="3.5" height="6" fill="#585e5a"/>
<rect x="-27.1" y="-67.2" width="5" height="6" fill="#3a3d3b"/>
<rect x="39.3" y="55.7" width="8" height="6" fill="#3a3d3b"/>
<rect x="26.7" y="13.1" width="3" height="10" fill="#3a3d3b"/>
<circle cx="-54.2" cy="-43.3" r="1.6" fill="#8fd896"/>
<rect x="21.2" y="-17.8" width="5" height="5" fill="#a9b1aa"/><rect x="22.4" y="-17.8" width="2.5" height="5" fill="#585e5a"/>
<rect x="-26.9" y="-10.6" width="3" height="6" fill="#3a3d3b"/>
<rect x="-51.8" y="42.2" width="6" height="8" fill="#a9b1aa"/><rect x="-50.3" y="42.2" width="3.0" height="8" fill="#585e5a"/>
<rect x="-15.3" y="12.5" width="4" height="10" fill="#a9b1aa"/><rect x="-14.3" y="12.5" width="2.0" height="10" fill="#585e5a"/>
<rect x="-54.1" y="19.7" width="5" height="4" fill="#a9b1aa"/><rect x="-52.9" y="19.7" width="2.5" height="4" fill="#585e5a"/>
<rect x="-66.7" y="23.0" width="4" height="4" fill="#a9b1aa"/><rect x="-65.7" y="23.0" width="2.0" height="4" fill="#585e5a"/>
<rect x="-65.6" y="29.8" width="5" height="6" fill="#a9b1aa"/><rect x="-64.3" y="29.8" width="2.5" height="6" fill="#585e5a"/>
<rect x="-61.2" y="37.3" width="10" height="4" fill="#a9b1aa"/><rect x="-58.7" y="37.3" width="5.0" height="4" fill="#585e5a"/>
<rect x="17.5" y="28.5" width="7" height="5" fill="#a9b1aa"/><rect x="19.2" y="28.5" width="3.5" height="5" fill="#585e5a"/>
<rect x="52.1" y="25.4" width="3" height="8" fill="#a9b1aa"/><rect x="52.9" y="25.4" width="1.5" height="8" fill="#585e5a"/>
<rect x="45.5" y="14.8" width="6" height="5" fill="#c9b58e"/>
<rect x="-4.1" y="-45.4" width="4" height="5" fill="#a9b1aa"/><rect x="-3.1" y="-45.4" width="2.0" height="5" fill="#585e5a"/>
<rect x="41.1" y="-3.1" width="7" height="5" fill="#3a3d3b"/>
<rect x="-28.2" y="-59.8" width="10" height="5" fill="#c9b58e"/>
<rect x="-65.9" y="-47.4" width="6" height="6" fill="#a9b1aa"/><rect x="-64.4" y="-47.4" width="3.0" height="6" fill="#585e5a"/>
<rect x="-15.3" y="-16.8" width="6" height="5" fill="#a9b1aa"/><rect x="-13.8" y="-16.8" width="3.0" height="5" fill="#585e5a"/>
<rect x="-32.2" y="-10.5" width="3" height="8" fill="#a9b1aa"/><rect x="-31.5" y="-10.5" width="1.5" height="8" fill="#585e5a"/>
<rect x="53.1" y="67.0" width="5" height="5" fill="#c9b58e"/>
<rect x="-0.0" y="4.7" width="8" height="6" fill="#a9b1aa"/><rect x="2.0" y="4.7" width="4.0" height="6" fill="#585e5a"/>
<rect x="34.0" y="58.7" width="5" height="5" fill="#3a3d3b"/>
<rect x="-4.7" y="-39.9" width="6" height="3" fill="#3a3d3b"/>
<rect x="-56.1" y="41.7" width="4" height="4" fill="#3a3d3b"/>
<rect x="-32.7" y="45.3" width="6" height="6" fill="#a9b1aa"/><rect x="-31.2" y="45.3" width="3.0" height="6" fill="#585e5a"/>
<rect x="-39.1" y="-55.5" width="5" height="10" fill="#3a3d3b"/>
<circle cx="-13.3" cy="2.3" r="1.6" fill="#8fd896"/>
<rect x="-17.1" y="-53.6" width="10" height="6" fill="#a9b1aa"/><rect x="-14.6" y="-53.6" width="5.0" height="6" fill="#585e5a"/>
<rect x="13.2" y="-21.1" width="3" height="8" fill="#a9b1aa"/><rect x="14.0" y="-21.1" width="1.5" height="8" fill="#585e5a"/>
<rect x="50.4" y="8.9" width="4" height="8" fill="#c9b58e"/>
<rect x="36.3" y="43.4" width="5" height="5" fill="#a9b1aa"/><rect x="37.6" y="43.4" width="2.5" height="5" fill="#585e5a"/>
<rect x="67.3" y="-16.6" width="3" height="4" fill="#a9b1aa"/><rect x="68.0" y="-16.6" width="1.5" height="4" fill="#585e5a"/>
<rect x="28.0" y="-1.8" width="4" height="6" fill="#c9b58e"/>
<rect x="-55.8" y="-24.7" width="5" height="3" fill="#3a3d3b"/>
<circle cx="-14.5" cy="-7.0" r="1.6" fill="#8fd896"/>
<rect x="-37.8" y="-62.7" width="5" height="6" fill="#3a3d3b"/>
<rect x="-64.2" y="57.0" width="6" height="6" fill="#a9b1aa"/><rect x="-62.7" y="57.0" width="3.0" height="6" fill="#585e5a"/>
<rect x="34.7" y="59.8" width="10" height="5" fill="#a9b1aa"/><rect x="37.2" y="59.8" width="5.0" height="5" fill="#585e5a"/>
<rect x="20.7" y="-4.0" width="5" height="6" fill="#a9b1aa"/><rect x="22.0" y="-4.0" width="2.5" height="6" fill="#585e5a"/>
<circle cx="-16.4" cy="-8.0" r="1.6" fill="#8fd896"/>
<circle cx="40.6" cy="-46.7" r="1.6" fill="#8fd896"/>
<rect x="52.9" y="-49.0" width="7" height="3" fill="#a9b1aa"/><rect x="54.6" y="-49.0" width="3.5" height="3" fill="#585e5a"/>
<rect x="-65.0" y="-57.8" width="6" height="5" fill="#3a3d3b"/>
<rect x="-37.9" y="-60.3" width="10" height="6" fill="#a9b1aa"/><rect x="-35.4" y="-60.3" width="5.0" height="6" fill="#585e5a"/>
<rect x="50.4" y="-31.8" width="4" height="7" fill="#a9b1aa"/><rect x="51.4" y="-31.8" width="2.0" height="7" fill="#585e5a"/>
<rect x="46.2" y="-22.5" width="5" height="5" fill="#a9b1aa"/><rect x="47.4" y="-22.5" width="2.5" height="5" fill="#585e5a"/>
<rect x="54.8" y="-52.5" width="8" height="3" fill="#c9b58e"/>
<rect x="57.8" y="8.2" width="3" height="6" fill="#a9b1aa"/><rect x="58.6" y="8.2" width="1.5" height="6" fill="#585e5a"/>
<rect x="-18.5" y="66.8" width="4" height="5" fill="#a9b1aa"/><rect x="-17.5" y="66.8" width="2.0" height="5" fill="#585e5a"/>
<rect x="53.9" y="-60.2" width="5" height="10" fill="#3a3d3b"/>
<rect x="-7.9" y="1.1" width="4" height="8" fill="#c9b58e"/>
<rect x="60.3" y="-29.1" width="6" height="6" fill="#a9b1aa"/><rect x="61.8" y="-29.1" width="3.0" height="6" fill="#585e5a"/>
<rect x="-30.3" y="-43.4" width="5" height="4" fill="#a9b1aa"/><rect x="-29.1" y="-43.4" width="2.5" height="4" fill="#585e5a"/>
<rect x="-57.2" y="-56.1" width="8" height="6" fill="#a9b1aa"/><rect x="-55.2" y="-56.1" width="4.0" height="6" fill="#585e5a"/>
<rect x="-49.4" y="23.1" width="10" height="4" fill="#a9b1aa"/><rect x="-46.9" y="23.1" width="5.0" height="4" fill="#585e5a"/>
<rect x="-59.1" y="31.6" width="7" height="3" fill="#a9b1aa"/><rect x="-57.3" y="31.6" width="3.5" height="3" fill="#585e5a"/>
<circle cx="-29.7" cy="18.9" r="1.6" fill="#8fd896"/>
<rect x="-31.8" y="-42.7" width="3" height="6" fill="#a9b1aa"/><rect x="-31.0" y="-42.7" width="1.5" height="6" fill="#585e5a"/>
<rect x="2.7" y="-7.4" width="3" height="8" fill="#c9b58e"/>
<circle cx="43.0" cy="49.7" r="1.6" fill="#8fd896"/>
<rect x="-28.4" y="-53.4" width="6" height="10" fill="#a9b1aa"/><rect x="-26.9" y="-53.4" width="3.0" height="10" fill="#585e5a"/>
<rect x="41.4" y="-49.7" width="3" height="5" fill="#a9b1aa"/><rect x="42.2" y="-49.7" width="1.5" height="5" fill="#585e5a"/>
<rect x="-54.0" y="-33.9" width="3" height="4" fill="#3a3d3b"/>
<rect x="-41.5" y="-65.6" width="8" height="6" fill="#c9b58e"/>
<rect x="-54.0" y="50.3" width="4" height="10" fill="#a9b1aa"/><rect x="-53.0" y="50.3" width="2.0" height="10" fill="#585e5a"/>
<rect x="-0.9" y="0.1" width="3" height="6" fill="#a9b1aa"/><rect x="-0.1" y="0.1" width="1.5" height="6" fill="#585e5a"/>
<rect x="-49.4" y="12.5" width="5" height="4" fill="#3a3d3b"/>
<rect x="-14.1" y="61.0" width="4" height="6" fill="#3a3d3b"/>
<rect x="-18.6" y="-13.5" width="6" height="6" fill="#3a3d3b"/>
<rect x="66.1" y="-24.4" width="3" height="7" fill="#a9b1aa"/><rect x="66.8" y="-24.4" width="1.5" height="7" fill="#585e5a"/>
<rect x="24.5" y="-19.9" width="3" height="7" fill="#3a3d3b"/>
<rect x="-58.6" y="-9.1" width="3" height="8" fill="#a9b1aa"/><rect x="-57.8" y="-9.1" width="1.5" height="8" fill="#585e5a"/>
<circle cx="-14.0" cy="67.7" r="1.6" fill="#8fd896"/>
<rect x="52.3" y="-63.3" width="10" height="5" fill="#3a3d3b"/>
<circle cx="-63.1" cy="-54.3" r="1.6" fill="#8fd896"/>
<rect x="-28.9" y="-26.5" width="4" height="10" fill="#3a3d3b"/>
<rect x="62.0" y="1.9" width="3" height="6" fill="#3a3d3b"/>
<rect x="-47.8" y="-51.1" width="5" height="5" fill="#3a3d3b"/>
<rect x="-30.7" y="32.1" width="10" height="5" fill="#3a3d3b"/>
<rect x="9.5" y="20.4" width="5" height="5" fill="#3a3d3b"/>
<rect x="15.3" y="-4.2" width="3" height="6" fill="#a9b1aa"/><rect x="16.1" y="-4.2" width="1.5" height="6" fill="#585e5a"/>
<rect x="-55" y="30" width="11" height="10" fill="#3c3f3e" stroke="#8c948c" stroke-width="0.8"/>
<rect x="-38" y="50" width="10" height="10" fill="#3c3f3e" stroke="#8c948c" stroke-width="0.8"/>
<rect x="-20" y="62" width="9" height="8" fill="#3c3f3e" stroke="#8c948c" stroke-width="0.8"/>
<rect x="-60" y="-5" width="8" height="10" fill="#3c3f3e" stroke="#8c948c" stroke-width="0.8"/>
<rect x="30" y="30" width="9" height="9" fill="#3c3f3e" stroke="#8c948c" stroke-width="0.8"/>
<rect x="55" y="45" width="8" height="8" fill="#3c3f3e" stroke="#8c948c" stroke-width="0.8"/>
<path d="M4.3 -67.4v5 M4.3 -35.4v5 M-2.7 -60.4h5 M29.3 -60.4h5 M6.4 -67.4v5 M6.4 -35.4v5 M-2.7 -58.3h5 M29.3 -58.3h5 M8.5 -67.4v5 M8.5 -35.4v5 M-2.7 -56.2h5 M29.3 -56.2h5 M10.6 -67.4v5 M10.6 -35.4v5 M-2.7 -54.1h5 M29.3 -54.1h5 M12.7 -67.4v5 M12.7 -35.4v5 M-2.7 -52.0h5 M29.3 -52.0h5 M14.8 -67.4v5 M14.8 -35.4v5 M-2.7 -49.9h5 M29.3 -49.9h5 M16.8 -67.4v5 M16.8 -35.4v5 M-2.7 -47.9h5 M29.3 -47.9h5 M18.9 -67.4v5 M18.9 -35.4v5 M-2.7 -45.8h5 M29.3 -45.8h5 M21.0 -67.4v5 M21.0 -35.4v5 M-2.7 -43.7h5 M29.3 -43.7h5 M23.1 -67.4v5 M23.1 -35.4v5 M-2.7 -41.6h5 M29.3 -41.6h5 M25.2 -67.4v5 M25.2 -35.4v5 M-2.7 -39.5h5 M29.3 -39.5h5 M27.3 -67.4v5 M27.3 -35.4v5 M-2.7 -37.4h5 M29.3 -37.4h5" stroke="#b9bcae" stroke-width="1.0"/>
<rect x="2.3" y="-62.4" width="27" height="27" fill="#3b3e3d"/>
<path d="M-4.4 33.1v5 M-4.4 64.1v5 M-11.4 40.1h5 M19.6 40.1h5 M-2.4 33.1v5 M-2.4 64.1v5 M-11.4 42.1h5 M19.6 42.1h5 M-0.4 33.1v5 M-0.4 64.1v5 M-11.4 44.1h5 M19.6 44.1h5 M1.6 33.1v5 M1.6 64.1v5 M-11.4 46.1h5 M19.6 46.1h5 M3.6 33.1v5 M3.6 64.1v5 M-11.4 48.1h5 M19.6 48.1h5 M5.6 33.1v5 M5.6 64.1v5 M-11.4 50.1h5 M19.6 50.1h5 M7.6 33.1v5 M7.6 64.1v5 M-11.4 52.1h5 M19.6 52.1h5 M9.6 33.1v5 M9.6 64.1v5 M-11.4 54.1h5 M19.6 54.1h5 M11.6 33.1v5 M11.6 64.1v5 M-11.4 56.1h5 M19.6 56.1h5 M13.6 33.1v5 M13.6 64.1v5 M-11.4 58.1h5 M19.6 58.1h5 M15.6 33.1v5 M15.6 64.1v5 M-11.4 60.1h5 M19.6 60.1h5 M17.6 33.1v5 M17.6 64.1v5 M-11.4 62.1h5 M19.6 62.1h5" stroke="#b9bcae" stroke-width="1.0"/>
<rect x="-6.4" y="38.1" width="26" height="26" fill="#3b3e3d"/>
<g fill="#d6b84a">
<circle cx="70.4" cy="-5.1" r="2.2"/>
<circle cx="64" cy="-8" r="2.2"/>
<circle cx="58" cy="-11" r="2.2"/>
<circle cx="52" cy="-14" r="2.2"/>
<circle cx="60" cy="22" r="2.2"/>
<circle cx="52" cy="28" r="2.2"/>
<circle cx="-58" cy="40" r="2.2"/>
<circle cx="-52" cy="44" r="2.2"/>
<circle cx="-46" cy="48" r="2.2"/>
<circle cx="-40" cy="52" r="2.2"/>
</g>
<circle cx="-67" cy="-67" r="7" fill="#e2c866"/><circle cx="-67" cy="-67" r="4.06" fill="#1c1c1c"/>
<circle cx="67" cy="-67" r="7" fill="#e2c866"/><circle cx="67" cy="-67" r="4.06" fill="#1c1c1c"/>
<circle cx="-67" cy="67" r="7" fill="#e2c866"/><circle cx="-67" cy="67" r="4.06" fill="#1c1c1c"/>
<circle cx="67" cy="67" r="7" fill="#e2c866"/><circle cx="67" cy="67" r="4.06" fill="#1c1c1c"/>
<circle cx="39.7" cy="0" r="6.5" fill="#e2c866"/><circle cx="39.7" cy="0" r="3.77" fill="#1c1c1c"/>
<circle cx="-42.2" cy="0.2" r="6.5" fill="#e2c866"/><circle cx="-42.2" cy="0.2" r="3.77" fill="#1c1c1c"/>
</g></svg>
<div class="r" style="left:547px;top:296px;width:485px;height:351px;border:1px solid #424242;border-radius:3px;box-sizing:border-box;"></div>
<div class="r" style="left:561px;top:309px;width:457px;height:44px;background:#2e2e2e;border-radius:0px;"></div>
<div class="r" style="left:561px;top:353px;width:457px;height:1px;background:#424242;border-radius:0px;"></div>
<div class="r" style="left:561px;top:401px;width:457px;height:1px;background:#424242;border-radius:0px;"></div>
<div class="r" style="left:561px;top:402px;width:457px;height:43px;background:#2e2e2e;border-radius:0px;"></div>
<div class="r" style="left:561px;top:445px;width:457px;height:1px;background:#424242;border-radius:0px;"></div>
<div class="r" style="left:561px;top:494px;width:457px;height:1px;background:#424242;border-radius:0px;"></div>
<div class="r" style="left:561px;top:495px;width:457px;height:63px;background:#2e2e2e;border-radius:0px;"></div>
<div class="r" style="left:561px;top:558px;width:457px;height:1px;background:#424242;border-radius:0px;"></div>
<svg class="i" style="left:576.00px;top:316.00px" width="30" height="30" viewBox="0 0 24 24" fill="none" stroke="#c9c9c9" stroke-width="1.9" stroke-linecap="round" stroke-linejoin="round"><path d="M12 3l8 4.5l0 9l-8 4.5l-8 -4.5l0 -9l8 -4.5"/><path d="M12 12l8 -4.5"/><path d="M12 12l0 9"/><path d="M12 12l-8 -4.5"/></svg>
<div class="t" style="left:631.60px;top:322.59px;font-size:19.5px;line-height:19.5px;color:#c9c9c9;font-weight:400;">Part</div>
<svg class="i" style="left:576.00px;top:360.00px" width="30" height="30" viewBox="0 0 24 24" fill="none" stroke="#c9c9c9" stroke-width="1.9" stroke-linecap="round" stroke-linejoin="round"><path d="M12 3l8 4.5l0 9l-8 4.5l-8 -4.5l0 -9l8 -4.5"/><path d="M12 12l8 -4.5"/><path d="M12 12l0 9"/><path d="M12 12l-8 -4.5"/></svg>
<div class="t" style="left:631.60px;top:367.39px;font-size:19.5px;line-height:19.5px;color:#c9c9c9;font-weight:400;">IPN</div>
<svg class="i" style="left:576.00px;top:409.00px" width="30" height="30" viewBox="0 0 24 24" fill="none" stroke="#c9c9c9" stroke-width="1.9" stroke-linecap="round" stroke-linejoin="round"><path d="M3 12a9 9 0 1 0 18 0a9 9 0 0 0 -18 0"/><path d="M12 9h.01"/><path d="M11 12h1v4h1"/></svg>
<div class="t" style="left:631.60px;top:415.49px;font-size:19.5px;line-height:19.5px;color:#c9c9c9;font-weight:400;">Status</div>
<svg class="i" style="left:576.00px;top:454.00px" width="30" height="30" viewBox="0 0 24 24" fill="none" stroke="#c9c9c9" stroke-width="1.9" stroke-linecap="round" stroke-linejoin="round"><path d="M5 9l14 0"/><path d="M5 15l14 0"/><path d="M11 4l-4 16"/><path d="M17 4l-4 16"/></svg>
<div class="t" style="left:631.60px;top:460.79px;font-size:19.5px;line-height:19.5px;color:#c9c9c9;font-weight:400;">Reference</div>
<svg class="i" style="left:576.00px;top:501.00px" width="30" height="30" viewBox="0 0 24 24" fill="none" stroke="#c9c9c9" stroke-width="1.9" stroke-linecap="round" stroke-linejoin="round"><path d="M3 12a9 9 0 1 0 18 0a9 9 0 0 0 -18 0"/><path d="M12 9h.01"/><path d="M11 12h1v4h1"/></svg>
<div class="t" style="left:631.60px;top:508.19px;font-size:19.5px;line-height:19.5px;color:#c9c9c9;font-weight:400;">Description</div>
<svg class="i" style="left:576.00px;top:581.00px" width="30" height="30" viewBox="0 0 24 24" fill="none" stroke="#c9c9c9" stroke-width="1.9" stroke-linecap="round" stroke-linejoin="round"><path d="M3 21h4l13 -13a1.5 1.5 0 0 0 -4 -4l-13 13v4"/><path d="M14.5 5.5l4 4"/><path d="M12 8l-5 -5l-4 4l5 5"/><path d="M7 8l-1.5 1.5"/><path d="M10 11l-1.5 1.5"/><path d="M16 12l5 5l-4 4l-5 -5"/><path d="M16 17l-1.5 1.5"/></svg>
<div class="t" style="left:631.60px;top:572.49px;font-size:19.5px;line-height:19.5px;color:#c9c9c9;font-weight:400;">Parent</div>
<div class="t" style="left:631.60px;top:602.99px;font-size:19.5px;line-height:19.5px;color:#c9c9c9;font-weight:400;">Build</div>
<div class="t" style="left:765.20px;top:322.75px;font-size:19.2px;line-height:19.2px;color:#748ffc;font-weight:400;letter-spacing:-0.109px;">Test Board 1</div>
<div class="t" style="left:765.20px;top:365.83px;font-size:16.5px;line-height:16.5px;color:#c9c9c9;font-weight:400;letter-spacing:-1.5px;">TB1</div>
<svg class="i" style="left:976.10px;top:360.50px" width="27" height="27" viewBox="0 0 24 24" fill="none" stroke="#c9c9c9" stroke-width="1.9" stroke-linecap="round" stroke-linejoin="round"><path d="M7 9.667a2.667 2.667 0 0 1 2.667 -2.667h8.666a2.667 2.667 0 0 1 2.667 2.667v8.666a2.667 2.667 0 0 1 -2.667 2.667h-8.666a2.667 2.667 0 0 1 -2.667 -2.667z"/><path d="M4.012 16.737a2.005 2.005 0 0 1 -1.012 -1.737v-10c0 -1.1 .9 -2 2 -2h10c.75 0 1.158 .385 1.5 1"/></svg>
<div class="r" style="left:765px;top:415px;width:94px;height:20px;background:#1971c2;border-radius:10px;"></div>
<div class="t" style="left:773.60px;top:419.93px;font-size:11.3px;line-height:11.3px;color:#ffffff;font-weight:700;letter-spacing:-0.011px;">PRODUCTION</div>
<div class="t" style="left:764.20px;top:459.03px;font-size:16.5px;line-height:16.5px;color:#c9c9c9;font-weight:400;letter-spacing:0.24px;">BO0011</div>
<svg class="i" style="left:976.10px;top:452.90px" width="27" height="27" viewBox="0 0 24 24" fill="none" stroke="#c9c9c9" stroke-width="1.9" stroke-linecap="round" stroke-linejoin="round"><path d="M7 9.667a2.667 2.667 0 0 1 2.667 -2.667h8.666a2.667 2.667 0 0 1 2.667 2.667v8.666a2.667 2.667 0 0 1 -2.667 2.667h-8.666a2.667 2.667 0 0 1 -2.667 -2.667z"/><path d="M4.012 16.737a2.005 2.005 0 0 1 -1.012 -1.737v-10c0 -1.1 .9 -2 2 -2h10c.75 0 1.158 .385 1.5 1"/></svg>
<div class="t" style="left:764.20px;top:506.63px;font-size:16.5px;line-height:16.5px;color:#c9c9c9;font-weight:400;letter-spacing:0.4px;">Required parts for Buil</div>
<div class="t" style="left:765.20px;top:532.03px;font-size:16.5px;line-height:16.5px;color:#c9c9c9;font-weight:400;">d 0010</div>
<svg class="i" style="left:976.10px;top:502.00px" width="27" height="27" viewBox="0 0 24 24" fill="none" stroke="#c9c9c9" stroke-width="1.9" stroke-linecap="round" stroke-linejoin="round"><path d="M7 9.667a2.667 2.667 0 0 1 2.667 -2.667h8.666a2.667 2.667 0 0 1 2.667 2.667v8.666a2.667 2.667 0 0 1 -2.667 2.667h-8.666a2.667 2.667 0 0 1 -2.667 -2.667z"/><path d="M4.012 16.737a2.005 2.005 0 0 1 -1.012 -1.737v-10c0 -1.1 .9 -2 2 -2h10c.75 0 1.158 .385 1.5 1"/></svg>
<div class="t" style="left:764.20px;top:572.95px;font-size:19.2px;line-height:19.2px;color:#748ffc;font-weight:400;letter-spacing:-0.1px;">BO0010</div>
<div class="r" style="left:1044px;top:296px;width:737px;height:351px;border:1px solid #424242;border-radius:3px;box-sizing:border-box;"></div>
<div class="r" style="left:1058px;top:309px;width:709px;height:44px;background:#2e2e2e;border-radius:0px;"></div>
<div class="r" style="left:1058px;top:353px;width:709px;height:1px;background:#424242;border-radius:0px;"></div>
<svg class="i" style="left:1073.50px;top:316.00px" width="30" height="30" viewBox="0 0 24 24" fill="none" stroke="#c9c9c9" stroke-width="1.9" stroke-linecap="round" stroke-linejoin="round"><path d="M8 10v-7l-2 2"/><path d="M6 16a2 2 0 1 1 4 0c0 .591 -.5 1 -1 1.5l-3 2.5h4"/><path d="M15 13a2 2 0 1 0 2 -2a2 2 0 1 0 -2 -2"/><path d="M6.5 10h3"/></svg>
<div class="t" style="left:1127.50px;top:322.79px;font-size:19.5px;line-height:19.5px;color:#c9c9c9;font-weight:400;letter-spacing:0.254px;">Build Quantity</div>
<div class="t" style="left:1487.90px;top:321.23px;font-size:16.5px;line-height:16.5px;color:#c9c9c9;font-weight:400;">50</div>
<svg class="i" style="left:1073.00px;top:360.00px" width="30" height="30" viewBox="0 0 24 24" fill="none" stroke="#c9c9c9" stroke-width="1.9" stroke-linecap="round" stroke-linejoin="round"><path d="M8.56 3.69a9 9 0 0 0 -2.92 1.95"/><path d="M3.69 8.56a9 9 0 0 0 -.69 3.44"/><path d="M3.69 15.44a9 9 0 0 0 1.95 2.92"/><path d="M8.56 20.31a9 9 0 0 0 3.44 .69"/><path d="M15.44 20.31a9 9 0 0 0 2.92 -1.95"/><path d="M20.31 15.44a9 9 0 0 0 .69 -3.44"/><path d="M20.31 8.56a9 9 0 0 0 -1.95 -2.92"/><path d="M15.44 3.69a9 9 0 0 0 -3.44 -.69"/><path d="M9 12l2 2l4 -4"/></svg>
<div class="t" style="left:1127.50px;top:367.09px;font-size:19.5px;line-height:19.5px;color:#c9c9c9;font-weight:400;letter-spacing:0.369px;">Completed Outputs</div>
<div class="t" style="left:1526.40px;top:363.40px;font-size:15px;line-height:15px;color:#c9c9c9;font-weight:400;letter-spacing:-0.033px;">25 / 50</div>
<div class="r" style="left:1487px;top:383px;width:125px;height:15px;background:#424242;border-radius:7.5px;overflow:hidden;"></div>
<div class="r" style="left:1487px;top:383px;width:62px;height:15px;background:#e8590c;border-radius:0px;border-radius:7.5px 0 0 7.5px;"></div>
<div class="r" style="left:295px;top:659px;width:737px;height:115px;border:1px solid #424242;border-radius:3px;box-sizing:border-box;"></div>
<div class="r" style="left:309px;top:673px;width:709px;height:43px;background:#2e2e2e;border-radius:0px;"></div>
<div class="r" style="left:309px;top:716px;width:709px;height:1px;background:#424242;border-radius:0px;"></div>
<svg class="i" style="left:324.00px;top:680.00px" width="30" height="30" viewBox="0 0 24 24" fill="none" stroke="#c9c9c9" stroke-width="1.9" stroke-linecap="round" stroke-linejoin="round"><path d="M8 7a4 4 0 1 0 8 0a4 4 0 0 0 -8 0"/><path d="M6 21v-2a4 4 0 0 1 4 -4h4a4 4 0 0 1 4 4v2"/></svg>
<div class="t" style="left:378.80px;top:686.39px;font-size:19.5px;line-height:19.5px;color:#c9c9c9;font-weight:400;letter-spacing:-0.488px;">Issued By</div>
<div class="r" style="left:717px;top:682px;width:77px;height:25px;background:#1a1a1a;border-radius:12.5px;"></div>
<div class="t" style="left:730.50px;top:688.49px;font-size:13.6px;line-height:13.6px;color:#ffffff;font-weight:700;letter-spacing:1.325px;-webkit-text-stroke:0.2px #fff;">ADMIN</div>
<svg class="i" style="left:809.00px;top:679.00px" width="30" height="30" viewBox="0 0 24 24" fill="none" stroke="#c9c9c9" stroke-width="1.9" stroke-linecap="round" stroke-linejoin="round"><path d="M8 7a4 4 0 1 0 8 0a4 4 0 0 0 -8 0"/><path d="M6 21v-2a4 4 0 0 1 4 -4h4a4 4 0 0 1 4 4v2"/></svg>
<svg class="i" style="left:324.00px;top:724.00px" width="30" height="30" viewBox="0 0 24 24" fill="none" stroke="#c9c9c9" stroke-width="1.9" stroke-linecap="round" stroke-linejoin="round"><path d="M9 11a3 3 0 1 0 6 0a3 3 0 0 0 -6 0"/><path d="M17.657 16.657l-4.243 4.243a2 2 0 0 1 -2.827 0l-4.244 -4.243a8 8 0 1 1 11.314 0z"/></svg>
<div class="t" style="left:377.90px;top:731.39px;font-size:19.5px;line-height:19.5px;color:#c9c9c9;font-weight:400;letter-spacing:0.079px;">Source Location</div>
<div class="t" style="left:717.20px;top:731.59px;font-size:19.5px;line-height:19.5px;color:#f26b6b;font-weight:400;letter-spacing:0.282px;">Any location</div>
<div class="r" style="left:1044px;top:659px;width:737px;height:115px;border:1px solid #424242;border-radius:3px;box-sizing:border-box;"></div>
<div class="r" style="left:1058px;top:673px;width:709px;height:47px;background:#2e2e2e;border-radius:0px;"></div>
<svg class="i" style="left:1073.00px;top:680.00px" width="30" height="30" viewBox="0 0 24 24" fill="none" stroke="#c9c9c9" stroke-width="1.9" stroke-linecap="round" stroke-linejoin="round"><path d="M4 7a2 2 0 0 1 2 -2h12a2 2 0 0 1 2 2v12a2 2 0 0 1 -2 2h-12a2 2 0 0 1 -2 -2v-12z"/><path d="M16 3v4"/><path d="M8 3v4"/><path d="M4 11h16"/><path d="M11 15h1"/><path d="M12 15v3"/></svg>
<div class="t" style="left:1127.00px;top:686.09px;font-size:19.5px;line-height:19.5px;color:#c9c9c9;font-weight:400;letter-spacing:-0.05px;">Created</div>
<div class="t" style="left:1397.60px;top:685.03px;font-size:16.5px;line-height:16.5px;color:#c9c9c9;font-weight:400;letter-spacing:0.522px;">2022-05-25</div>
<svg class="i" style="left:1661.30px;top:679.50px" width="27" height="27" viewBox="0 0 24 24" fill="none" stroke="#c9c9c9" stroke-width="1.9" stroke-linecap="round" stroke-linejoin="round"><path d="M7 9.667a2.667 2.667 0 0 1 2.667 -2.667h8.666a2.667 2.667 0 0 1 2.667 2.667v8.666a2.667 2.667 0 0 1 -2.667 2.667h-8.666a2.667 2.667 0 0 1 -2.667 -2.667z"/><path d="M4.012 16.737a2.005 2.005 0 0 1 -1.012 -1.737v-10c0 -1.1 .9 -2 2 -2h10c.75 0 1.158 .385 1.5 1"/></svg>
</body></html>
